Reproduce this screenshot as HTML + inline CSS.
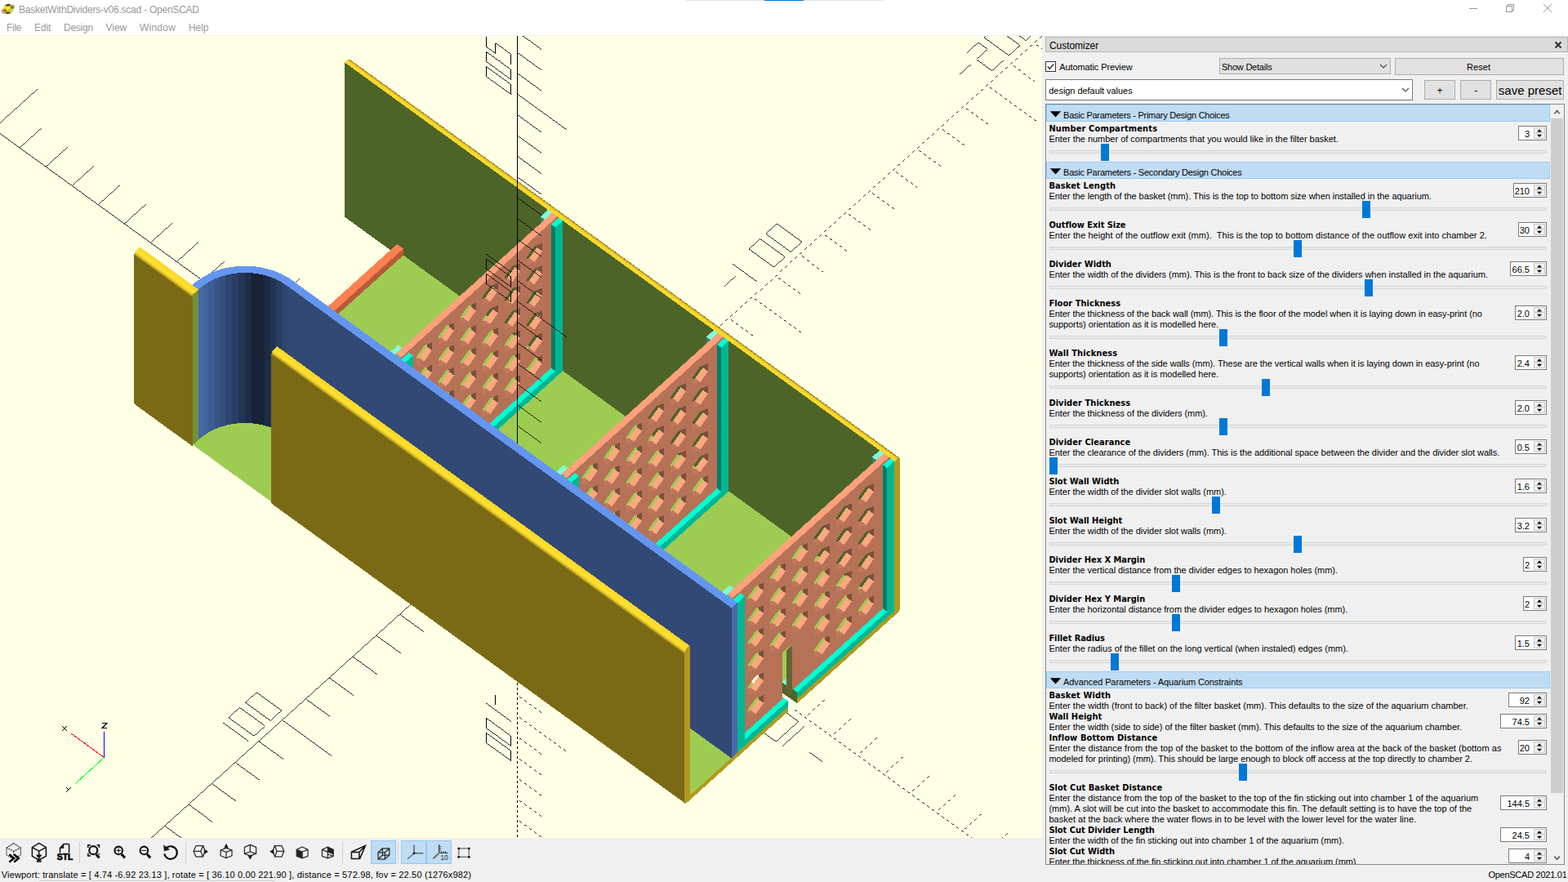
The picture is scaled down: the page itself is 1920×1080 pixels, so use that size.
<!DOCTYPE html>
<html lang="en"><head><meta charset="utf-8"><title>BasketWithDividers-v06.scad - OpenSCAD</title>
<style>
html,body{margin:0;padding:0;width:1920px;height:1080px;overflow:hidden;background:#f0f0f0;font-family:"Liberation Sans", sans-serif;}
.b{position:absolute;display:block}
.t{position:absolute;white-space:pre;line-height:1;font-family:"Liberation Sans", sans-serif;font-size:11px;color:#000}
.bd{font-weight:bold;font-family:"DejaVu Sans Condensed", "Liberation Sans", sans-serif}
#vp{position:absolute;left:0;top:44px;width:1276px;height:982px;overflow:hidden;display:block}
</style></head><body>
<svg id="vp" width="1276" height="982" viewBox="0 0 1276 982" shape-rendering="crispEdges">
<rect width="1276" height="982" fill="#ffffe5"/>
<g stroke="#000" stroke-width="1" fill="none">
<line x1="633.3" y1="578.7" x2="-19.2" y2="105.6" stroke-width="0.81"/>
<line x1="601.2" y1="555.4" x2="628" y2="531.3" stroke-width="0.74"/>
<line x1="569.2" y1="532.2" x2="595.9" y2="508.1" stroke-width="0.74"/>
<line x1="537.1" y1="508.9" x2="563.8" y2="484.8" stroke-width="0.74"/>
<line x1="505" y1="485.7" x2="531.8" y2="461.6" stroke-width="0.74"/>
<line x1="473" y1="462.4" x2="499.7" y2="438.4" stroke-width="0.74"/>
<line x1="440.9" y1="439.2" x2="467.6" y2="415.1" stroke-width="0.74"/>
<line x1="408.8" y1="415.9" x2="435.6" y2="391.9" stroke-width="0.74"/>
<line x1="376.8" y1="392.7" x2="403.5" y2="368.6" stroke-width="0.74"/>
<line x1="344.7" y1="369.4" x2="371.4" y2="345.4" stroke-width="0.74"/>
<line x1="312.6" y1="346.2" x2="366.8" y2="297.4" stroke-width="0.74"/>
<line x1="280.6" y1="322.9" x2="307.3" y2="298.9" stroke-width="0.74"/>
<line x1="248.5" y1="299.7" x2="275.2" y2="275.6" stroke-width="0.74"/>
<line x1="216.4" y1="276.5" x2="243.2" y2="252.4" stroke-width="0.74"/>
<line x1="184.4" y1="253.2" x2="211.1" y2="229.1" stroke-width="0.74"/>
<line x1="152.3" y1="230" x2="179" y2="205.9" stroke-width="0.74"/>
<line x1="120.2" y1="206.7" x2="147" y2="182.6" stroke-width="0.74"/>
<line x1="88.2" y1="183.5" x2="114.9" y2="159.4" stroke-width="0.74"/>
<line x1="56.1" y1="160.2" x2="82.8" y2="136.2" stroke-width="0.74"/>
<line x1="24" y1="137" x2="50.8" y2="112.9" stroke-width="0.74"/>
<line x1="-8" y1="113.7" x2="46.2" y2="64.9" stroke-width="0.74"/>
<line x1="633.3" y1="578.7" x2="2469.8" y2="1910" stroke-width="0.81" stroke-dasharray="3.71 3.71" stroke-dashoffset="3.71"/>
<line x1="665.4" y1="601.9" x2="692.1" y2="577.8" stroke-width="0.74" stroke-dasharray="4.04 4.04" stroke-dashoffset="4.04"/>
<line x1="697.4" y1="625.2" x2="724.2" y2="601.1" stroke-width="0.74" stroke-dasharray="4.04 4.04" stroke-dashoffset="4.04"/>
<line x1="729.5" y1="648.4" x2="756.2" y2="624.3" stroke-width="0.74" stroke-dasharray="4.04 4.04" stroke-dashoffset="4.04"/>
<line x1="761.6" y1="671.6" x2="788.3" y2="647.6" stroke-width="0.74" stroke-dasharray="4.04 4.04" stroke-dashoffset="4.04"/>
<line x1="793.6" y1="694.9" x2="820.3" y2="670.8" stroke-width="0.74" stroke-dasharray="4.04 4.04" stroke-dashoffset="4.04"/>
<line x1="825.7" y1="718.1" x2="852.4" y2="694.1" stroke-width="0.74" stroke-dasharray="4.04 4.04" stroke-dashoffset="4.04"/>
<line x1="857.7" y1="741.4" x2="884.5" y2="717.3" stroke-width="0.74" stroke-dasharray="4.04 4.04" stroke-dashoffset="4.04"/>
<line x1="889.8" y1="764.6" x2="916.5" y2="740.6" stroke-width="0.74" stroke-dasharray="4.04 4.04" stroke-dashoffset="4.04"/>
<line x1="921.9" y1="787.9" x2="948.6" y2="763.8" stroke-width="0.74" stroke-dasharray="4.04 4.04" stroke-dashoffset="4.04"/>
<line x1="953.9" y1="811.1" x2="1008.1" y2="762.3" stroke-width="0.74" stroke-dasharray="4.04 4.04" stroke-dashoffset="4.04"/>
<line x1="986" y1="834.4" x2="1012.7" y2="810.3" stroke-width="0.74" stroke-dasharray="4.04 4.04" stroke-dashoffset="4.04"/>
<line x1="1018.1" y1="857.6" x2="1044.8" y2="833.5" stroke-width="0.74" stroke-dasharray="4.04 4.04" stroke-dashoffset="4.04"/>
<line x1="1050.1" y1="880.9" x2="1076.9" y2="856.8" stroke-width="0.74" stroke-dasharray="4.04 4.04" stroke-dashoffset="4.04"/>
<line x1="1082.2" y1="904.1" x2="1108.9" y2="880" stroke-width="0.74" stroke-dasharray="4.04 4.04" stroke-dashoffset="4.04"/>
<line x1="1114.3" y1="927.4" x2="1141" y2="903.3" stroke-width="0.74" stroke-dasharray="4.04 4.04" stroke-dashoffset="4.04"/>
<line x1="1146.3" y1="950.6" x2="1173.1" y2="926.5" stroke-width="0.74" stroke-dasharray="4.04 4.04" stroke-dashoffset="4.04"/>
<line x1="1178.4" y1="973.8" x2="1205.1" y2="949.8" stroke-width="0.74" stroke-dasharray="4.04 4.04" stroke-dashoffset="4.04"/>
<line x1="1210.5" y1="997.1" x2="1237.2" y2="973" stroke-width="0.74" stroke-dasharray="4.04 4.04" stroke-dashoffset="4.04"/>
<line x1="285.9" y1="382.7" x2="313.4" y2="357.9" stroke-width="0.74"/>
<line x1="263" y1="366" x2="247.7" y2="354.9" stroke-width="0.81"/>
<line x1="247.7" y1="354.9" x2="275.1" y2="330.2" stroke-width="0.74"/>
<line x1="275.1" y1="330.2" x2="290.5" y2="341.3" stroke-width="0.81"/>
<line x1="290.5" y1="341.3" x2="263" y2="366" stroke-width="0.74"/>
<line x1="240" y1="349.4" x2="224.7" y2="338.3" stroke-width="0.81"/>
<line x1="224.7" y1="338.3" x2="252.2" y2="313.5" stroke-width="0.74"/>
<line x1="252.2" y1="313.5" x2="267.5" y2="324.6" stroke-width="0.81"/>
<line x1="267.5" y1="324.6" x2="240" y2="349.4" stroke-width="0.74"/>
<line x1="911.9" y1="836.5" x2="927.3" y2="847.6" stroke-width="0.81"/>
<line x1="927.3" y1="847.6" x2="954.7" y2="822.9" stroke-width="0.74"/>
<line x1="954.7" y1="822.9" x2="939.4" y2="811.8" stroke-width="0.81"/>
<line x1="939.4" y1="811.8" x2="911.9" y2="836.5" stroke-width="0.74"/>
<line x1="934.9" y1="853.1" x2="950.2" y2="864.2" stroke-width="0.81"/>
<line x1="950.2" y1="864.2" x2="977.7" y2="839.5" stroke-width="0.74"/>
<line x1="977.7" y1="839.5" x2="962.4" y2="828.4" stroke-width="0.81"/>
<line x1="962.4" y1="828.4" x2="934.9" y2="853.1" stroke-width="0.74"/>
<line x1="957.9" y1="869.8" x2="985.4" y2="845.1" stroke-width="0.74"/>
<line x1="991.1" y1="877.2" x2="1006.5" y2="888.3" stroke-width="0.81"/>
</g>
<g stroke="#000" stroke-width="1" fill="none">
<line x1="633.3" y1="578.7" x2="155" y2="1009.3" stroke-width="0.74"/>
<line x1="604.5" y1="604.6" x2="634.3" y2="626.2" stroke-width="0.81"/>
<line x1="575.7" y1="630.5" x2="605.6" y2="652.1" stroke-width="0.81"/>
<line x1="547" y1="656.4" x2="576.8" y2="678" stroke-width="0.81"/>
<line x1="518.2" y1="682.3" x2="548" y2="703.9" stroke-width="0.81"/>
<line x1="489.4" y1="708.2" x2="519.2" y2="729.8" stroke-width="0.81"/>
<line x1="460.7" y1="734.1" x2="490.5" y2="755.7" stroke-width="0.81"/>
<line x1="431.9" y1="760" x2="461.7" y2="781.6" stroke-width="0.81"/>
<line x1="403.1" y1="785.9" x2="432.9" y2="807.5" stroke-width="0.81"/>
<line x1="374.4" y1="811.8" x2="404.2" y2="833.4" stroke-width="0.81"/>
<line x1="345.6" y1="837.7" x2="406" y2="881.6" stroke-width="0.81"/>
<line x1="316.8" y1="863.7" x2="346.6" y2="885.3" stroke-width="0.81"/>
<line x1="288" y1="889.6" x2="317.9" y2="911.2" stroke-width="0.81"/>
<line x1="259.3" y1="915.5" x2="289.1" y2="937.1" stroke-width="0.81"/>
<line x1="230.5" y1="941.4" x2="260.3" y2="963" stroke-width="0.81"/>
<line x1="201.7" y1="967.3" x2="231.5" y2="988.9" stroke-width="0.81"/>
<line x1="633.3" y1="578.7" x2="2281" y2="-905.2" stroke-width="0.74" stroke-dasharray="4.04 4.04" stroke-dashoffset="4.04"/>
<line x1="662.1" y1="552.7" x2="691.9" y2="574.4" stroke-width="0.81" stroke-dasharray="3.71 3.71" stroke-dashoffset="3.71"/>
<line x1="690.8" y1="526.8" x2="720.6" y2="548.5" stroke-width="0.81" stroke-dasharray="3.71 3.71" stroke-dashoffset="3.71"/>
<line x1="719.6" y1="500.9" x2="749.4" y2="522.5" stroke-width="0.81" stroke-dasharray="3.71 3.71" stroke-dashoffset="3.71"/>
<line x1="748.4" y1="475" x2="778.2" y2="496.6" stroke-width="0.81" stroke-dasharray="3.71 3.71" stroke-dashoffset="3.71"/>
<line x1="777.1" y1="449.1" x2="807" y2="470.7" stroke-width="0.81" stroke-dasharray="3.71 3.71" stroke-dashoffset="3.71"/>
<line x1="805.9" y1="423.2" x2="835.7" y2="444.8" stroke-width="0.81" stroke-dasharray="3.71 3.71" stroke-dashoffset="3.71"/>
<line x1="834.7" y1="397.3" x2="864.5" y2="418.9" stroke-width="0.81" stroke-dasharray="3.71 3.71" stroke-dashoffset="3.71"/>
<line x1="863.5" y1="371.4" x2="893.3" y2="393" stroke-width="0.81" stroke-dasharray="3.71 3.71" stroke-dashoffset="3.71"/>
<line x1="892.2" y1="345.5" x2="922" y2="367.1" stroke-width="0.81" stroke-dasharray="3.71 3.71" stroke-dashoffset="3.71"/>
<line x1="921" y1="319.6" x2="981.4" y2="363.4" stroke-width="0.81" stroke-dasharray="3.71 3.71" stroke-dashoffset="3.71"/>
<line x1="949.8" y1="293.7" x2="979.6" y2="315.3" stroke-width="0.81" stroke-dasharray="3.71 3.71" stroke-dashoffset="3.71"/>
<line x1="978.5" y1="267.8" x2="1008.3" y2="289.4" stroke-width="0.81" stroke-dasharray="3.71 3.71" stroke-dashoffset="3.71"/>
<line x1="1007.3" y1="241.8" x2="1037.1" y2="263.5" stroke-width="0.81" stroke-dasharray="3.71 3.71" stroke-dashoffset="3.71"/>
<line x1="1036.1" y1="215.9" x2="1065.9" y2="237.6" stroke-width="0.81" stroke-dasharray="3.71 3.71" stroke-dashoffset="3.71"/>
<line x1="1064.8" y1="190" x2="1094.7" y2="211.6" stroke-width="0.81" stroke-dasharray="3.71 3.71" stroke-dashoffset="3.71"/>
<line x1="1093.6" y1="164.1" x2="1123.4" y2="185.7" stroke-width="0.81" stroke-dasharray="3.71 3.71" stroke-dashoffset="3.71"/>
<line x1="1122.4" y1="138.2" x2="1152.2" y2="159.8" stroke-width="0.81" stroke-dasharray="3.71 3.71" stroke-dashoffset="3.71"/>
<line x1="1151.2" y1="112.3" x2="1181" y2="133.9" stroke-width="0.81" stroke-dasharray="3.71 3.71" stroke-dashoffset="3.71"/>
<line x1="1179.9" y1="86.4" x2="1209.7" y2="108" stroke-width="0.81" stroke-dasharray="3.71 3.71" stroke-dashoffset="3.71"/>
<line x1="1208.7" y1="60.5" x2="1269.1" y2="104.3" stroke-width="0.81" stroke-dasharray="3.71 3.71" stroke-dashoffset="3.71"/>
<line x1="1237.5" y1="34.6" x2="1267.3" y2="56.2" stroke-width="0.81" stroke-dasharray="3.71 3.71" stroke-dashoffset="3.71"/>
<line x1="1266.2" y1="8.7" x2="1296.1" y2="30.3" stroke-width="0.81" stroke-dasharray="3.71 3.71" stroke-dashoffset="3.71"/>
<line x1="314.2" y1="803.8" x2="300.4" y2="816.2" stroke-width="0.74"/>
<line x1="300.4" y1="816.2" x2="331.1" y2="838.4" stroke-width="0.81"/>
<line x1="331.1" y1="838.4" x2="344.8" y2="826" stroke-width="0.74"/>
<line x1="344.8" y1="826" x2="314.2" y2="803.8" stroke-width="0.81"/>
<line x1="293.6" y1="822.4" x2="279.8" y2="834.7" stroke-width="0.74"/>
<line x1="279.8" y1="834.7" x2="310.5" y2="856.9" stroke-width="0.81"/>
<line x1="310.5" y1="856.9" x2="324.2" y2="844.6" stroke-width="0.74"/>
<line x1="324.2" y1="844.6" x2="293.6" y2="822.4" stroke-width="0.81"/>
<line x1="273" y1="840.9" x2="303.6" y2="863.1" stroke-width="0.81"/>
<line x1="887.3" y1="306.3" x2="901.1" y2="294" stroke-width="0.74"/>
<line x1="896.5" y1="279.5" x2="927.1" y2="301.7" stroke-width="0.81"/>
<line x1="917.1" y1="260.9" x2="930.8" y2="248.5" stroke-width="0.74"/>
<line x1="930.8" y1="248.5" x2="961.4" y2="270.7" stroke-width="0.81"/>
<line x1="961.4" y1="270.7" x2="947.7" y2="283.1" stroke-width="0.74"/>
<line x1="947.7" y1="283.1" x2="917.1" y2="260.9" stroke-width="0.81"/>
<line x1="937.7" y1="242.3" x2="951.4" y2="230" stroke-width="0.74"/>
<line x1="951.4" y1="230" x2="982" y2="252.2" stroke-width="0.81"/>
<line x1="982" y1="252.2" x2="968.3" y2="264.5" stroke-width="0.74"/>
<line x1="968.3" y1="264.5" x2="937.7" y2="242.3" stroke-width="0.81"/>
<line x1="1175" y1="47.3" x2="1188.8" y2="34.9" stroke-width="0.74"/>
<line x1="1184.2" y1="20.4" x2="1197.9" y2="8" stroke-width="0.74"/>
<line x1="1197.9" y1="8" x2="1209.4" y2="16.3" stroke-width="0.81"/>
<line x1="1209.4" y1="16.3" x2="1195.6" y2="28.7" stroke-width="0.74"/>
<line x1="1195.6" y1="28.7" x2="1214.8" y2="42.6" stroke-width="0.81"/>
<line x1="1214.8" y1="42.6" x2="1228.5" y2="30.2" stroke-width="0.74"/>
<line x1="1204.8" y1="1.8" x2="1218.5" y2="-10.6" stroke-width="0.74"/>
<line x1="1218.5" y1="-10.6" x2="1249.1" y2="11.6" stroke-width="0.81"/>
<line x1="1249.1" y1="11.6" x2="1235.4" y2="24" stroke-width="0.74"/>
<line x1="1235.4" y1="24" x2="1204.8" y2="1.8" stroke-width="0.81"/>
<line x1="1269.7" y1="-6.9" x2="1256" y2="5.5" stroke-width="0.74"/>
<line x1="1256" y1="5.5" x2="1225.4" y2="-16.7" stroke-width="0.81"/>
</g>
<polygon points="1095.4,709.8 422,221.6 422,32.5 1095.4,520.7" fill="#4d6428"/>
<polygon points="1098,518.3 424.6,30.2 422,32.5 1095.4,520.7" fill="#fbd82c"/>
<polygon points="1098,518.3 424.6,30.2 425.4,29.5 1098.8,517.7" fill="#f3d22b"/>
<polygon points="1098.8,517.7 425.4,29.5 426.2,29.1 1099.5,517.2" fill="#e0c128"/>
<polygon points="1099.5,517.2 426.2,29.1 426.9,28.7 1100.2,516.9" fill="#c7ac23"/>
<polygon points="1100.2,516.9 426.9,28.7 427.5,28.6 1100.9,516.7" fill="#a9921e"/>
<polygon points="1100.9,516.7 427.5,28.6 428,28.6 1101.4,516.7" fill="#877518"/>
<polygon points="1101.4,516.7 428,28.6 428.4,28.8 1101.8,516.9" fill="#635511"/>
<polygon points="1095.4,709.8 1095.4,520.7 1098,518.3 1099.3,517.3 1100.5,516.8 1101.5,516.8 1102.1,517.3 1102.3,518.3 1102.3,699.8 1102.1,701.1 1101.5,702.7 1100.5,704.4 1099.3,706.1 1098,707.5" fill="#b29a1f"/>
<polygon points="1095.4,704.7 493.9,268.6 236.1,500.7 837.6,936.8" fill="#9ecc52"/>
<polygon points="270.6,469.7 262.9,464.1 262.9,456 270.6,461.5" fill="#7d3e27"/>
<polygon points="493.9,268.6 270.6,469.7 270.6,461.5 493.9,260.5" fill="#b65b39"/>
<polygon points="493.9,260.5 486.2,254.9 262.9,456 270.6,461.5" fill="#ff8051"/>
<polygon points="666.9,409 661.8,405.3 661.8,221.3 666.9,225" fill="#3e7d68"/>
<polygon points="676.1,400.7 666.9,409 666.9,225 676.1,216.7" fill="#5bb697"/>
<polygon points="676.1,216.7 671,213 661.8,221.3 666.9,225" fill="#80ffd5"/>
<polygon points="483.3,574.3 478.2,570.6 478.2,386.6 483.3,390.3" fill="#3e7d68"/>
<polygon points="492.5,566 483.3,574.3 483.3,390.3 492.5,382" fill="#5bb697"/>
<polygon points="492.5,382 487.4,378.3 478.2,386.6 483.3,390.3" fill="#80ffd5"/>
<polygon points="682.5,221.3 676.1,216.7 484.8,389 491.2,393.6" fill="#ffa17b"/>
<path d="M682.5 405.4 L491.2 577.7 L491.2 393.6 L682.5 221.3ZM522.5 377.8 L522.5 380.3 L513.1 393.6 L510 394.8 L510 392.3 L519.5 379ZM522.5 405.3 L522.5 407.8 L513.1 421.1 L510 422.3 L510 419.8 L519.5 406.5ZM522.5 432.8 L522.5 435.2 L513.1 448.6 L510 449.8 L510 447.3 L519.5 434ZM522.5 460.2 L522.5 462.7 L513.1 476.1 L510 477.3 L510 474.8 L519.5 461.4ZM522.5 487.7 L522.5 490.2 L513.1 503.6 L510 504.8 L510 502.3 L519.5 488.9ZM522.5 515.2 L522.5 517.7 L513.1 531.1 L510 532.3 L510 529.8 L519.5 516.4ZM549.5 353.5 L549.5 356 L540 369.3 L537 370.5 L537 368 L546.5 354.7ZM549.5 381 L549.5 383.5 L540 396.8 L537 398 L537 395.5 L546.5 382.2ZM549.5 408.5 L549.5 410.9 L540 424.3 L537 425.5 L537 423 L546.5 409.7ZM549.5 435.9 L549.5 438.4 L540 451.8 L537 453 L537 450.5 L546.5 437.1ZM549.5 463.4 L549.5 465.9 L540 479.3 L537 480.5 L537 478 L546.5 464.6ZM549.5 490.9 L549.5 493.4 L540 506.8 L537 508 L537 505.5 L546.5 492.1ZM576.5 329.2 L576.5 331.7 L567 345 L564 346.2 L564 343.7 L573.4 330.4ZM576.5 356.7 L576.5 359.2 L567 372.5 L564 373.7 L564 371.2 L573.4 357.9ZM576.5 384.2 L576.5 386.6 L567 400 L564 401.2 L564 398.7 L573.4 385.3ZM576.5 411.6 L576.5 414.1 L567 427.5 L564 428.7 L564 426.2 L573.4 412.8ZM576.5 439.1 L576.5 441.6 L567 455 L564 456.2 L564 453.7 L573.4 440.3ZM576.5 466.6 L576.5 469.1 L567 482.5 L564 483.7 L564 481.2 L573.4 467.8ZM603.5 304.9 L603.5 307.4 L594 320.7 L591 321.9 L591 319.4 L600.4 306.1ZM603.5 332.4 L603.5 334.9 L594 348.2 L591 349.4 L591 346.9 L600.4 333.6ZM603.5 359.9 L603.5 362.3 L594 375.7 L591 376.9 L591 374.4 L600.4 361ZM603.5 387.3 L603.5 389.8 L594 403.2 L591 404.4 L591 401.9 L600.4 388.5ZM603.5 414.8 L603.5 417.3 L594 430.7 L591 431.9 L591 429.4 L600.4 416ZM603.5 442.3 L603.5 444.8 L594 458.2 L591 459.4 L591 456.9 L600.4 443.5ZM630.5 280.6 L630.5 283.1 L621 296.4 L617.9 297.6 L617.9 295.1 L627.4 281.8ZM630.5 308.1 L630.5 310.5 L621 323.9 L617.9 325.1 L617.9 322.6 L627.4 309.3ZM630.5 335.6 L630.5 338 L621 351.4 L617.9 352.6 L617.9 350.1 L627.4 336.7ZM630.5 363 L630.5 365.5 L621 378.9 L617.9 380.1 L617.9 377.6 L627.4 364.2ZM630.5 390.5 L630.5 393 L621 406.4 L617.9 407.6 L617.9 405.1 L627.4 391.7ZM630.5 418 L630.5 420.5 L621 433.9 L617.9 435.1 L617.9 432.6 L627.4 419.2ZM657.5 256.3 L657.5 258.8 L648 272.1 L644.9 273.3 L644.9 270.8 L654.4 257.5ZM657.5 283.8 L657.5 286.2 L648 299.6 L644.9 300.8 L644.9 298.3 L654.4 285ZM657.5 311.2 L657.5 313.7 L648 327.1 L644.9 328.3 L644.9 325.8 L654.4 312.4ZM657.5 338.7 L657.5 341.2 L648 354.6 L644.9 355.8 L644.9 353.3 L654.4 339.9ZM657.5 366.2 L657.5 368.7 L648 382.1 L644.9 383.3 L644.9 380.8 L654.4 367.4ZM657.5 393.7 L657.5 396.2 L648 409.6 L644.9 410.7 L644.9 408.3 L654.4 394.9Z" fill="#b67257" fill-rule="evenodd"/>
<polygon points="522.5,380.3 522.5,377.8 528.9,375.3 528.9,375.3 528.9,384.9" fill="#7d4f3c"/>
<polygon points="513.1,393.6 522.5,380.3 528.9,384.9 519.5,398.3" fill="#ffa77f"/>
<polygon points="510,402 510,394.8 513.1,393.6 519.5,398.3 510,402" fill="#c0785c"/>
<polygon points="528.9,375.3 519.5,379 519.5,379 519.5,379 528.9,375.3" fill="#7d4f3c"/>
<polygon points="522.5,407.8 522.5,405.3 528.9,402.8 528.9,402.8 528.9,412.4" fill="#7d4f3c"/>
<polygon points="513.1,421.1 522.5,407.8 528.9,412.4 519.5,425.8" fill="#ffa77f"/>
<polygon points="510,429.5 510,422.3 513.1,421.1 519.5,425.8 510,429.5" fill="#c0785c"/>
<polygon points="528.9,402.8 519.5,406.5 519.5,406.5 519.5,406.5 528.9,402.8" fill="#7d4f3c"/>
<polygon points="522.5,435.2 522.5,432.8 528.9,430.3 528.9,430.3 528.9,439.9" fill="#7d4f3c"/>
<polygon points="513.1,448.6 522.5,435.2 528.9,439.9 519.5,453.2" fill="#ffa77f"/>
<polygon points="510,456.9 510,449.8 513.1,448.6 519.5,453.2 510,456.9" fill="#c0785c"/>
<polygon points="528.9,430.3 519.5,434 519.5,434 519.5,434 528.9,430.3" fill="#7d4f3c"/>
<polygon points="522.5,462.7 522.5,460.2 528.9,457.7 528.9,457.7 528.9,467.4" fill="#7d4f3c"/>
<polygon points="513.1,476.1 522.5,462.7 528.9,467.4 519.5,480.7" fill="#ffa77f"/>
<polygon points="510,484.4 510,477.3 513.1,476.1 519.5,480.7 510,484.4" fill="#c0785c"/>
<polygon points="528.9,457.7 519.5,461.4 519.5,461.4 519.5,461.4 528.9,457.7" fill="#7d4f3c"/>
<polygon points="522.5,490.2 522.5,487.7 528.9,485.2 528.9,485.2 528.9,494.9" fill="#7d4f3c"/>
<polygon points="513.1,503.6 522.5,490.2 528.9,494.9 519.5,508.2" fill="#ffa77f"/>
<polygon points="510,511.9 510,504.8 513.1,503.6 519.5,508.2 510,511.9" fill="#c0785c"/>
<polygon points="528.9,485.2 519.5,488.9 519.5,488.9 519.5,488.9 528.9,485.2" fill="#7d4f3c"/>
<polygon points="522.5,517.7 522.5,515.2 528.9,512.7 528.9,512.7 528.9,522.4" fill="#7d4f3c"/>
<polygon points="513.1,531.1 522.5,517.7 528.9,522.4 519.5,535.7" fill="#ffa77f"/>
<polygon points="510,539.4 510,532.3 513.1,531.1 519.5,535.7 510,539.4" fill="#c0785c"/>
<polygon points="528.9,512.7 519.5,516.4 519.5,516.4 519.5,516.4 528.9,512.7" fill="#7d4f3c"/>
<polygon points="549.5,356 549.5,353.5 555.9,351 555.9,351 555.9,360.6" fill="#7d4f3c"/>
<polygon points="540,369.3 549.5,356 555.9,360.6 546.5,374" fill="#ffa77f"/>
<polygon points="537,377.7 537,370.5 540,369.3 546.5,374 537,377.7" fill="#c0785c"/>
<polygon points="555.9,351 546.5,354.7 546.5,354.7 546.5,354.7 555.9,351" fill="#7d4f3c"/>
<polygon points="549.5,383.5 549.5,381 555.9,378.5 555.9,378.5 555.9,388.1" fill="#7d4f3c"/>
<polygon points="540,396.8 549.5,383.5 555.9,388.1 546.5,401.5" fill="#ffa77f"/>
<polygon points="537,405.2 537,398 540,396.8 546.5,401.5 537,405.2" fill="#c0785c"/>
<polygon points="555.9,378.5 546.5,382.2 546.5,382.2 546.5,382.2 555.9,378.5" fill="#7d4f3c"/>
<polygon points="549.5,410.9 549.5,408.5 555.9,405.9 555.9,405.9 555.9,415.6" fill="#7d4f3c"/>
<polygon points="540,424.3 549.5,410.9 555.9,415.6 546.5,428.9" fill="#ffa77f"/>
<polygon points="537,432.6 537,425.5 540,424.3 546.5,428.9 537,432.6" fill="#c0785c"/>
<polygon points="555.9,405.9 546.5,409.7 546.5,409.7 546.5,409.7 555.9,405.9" fill="#7d4f3c"/>
<polygon points="549.5,438.4 549.5,435.9 555.9,433.4 555.9,433.4 555.9,443.1" fill="#7d4f3c"/>
<polygon points="540,451.8 549.5,438.4 555.9,443.1 546.5,456.4" fill="#ffa77f"/>
<polygon points="537,460.1 537,453 540,451.8 546.5,456.4 537,460.1" fill="#c0785c"/>
<polygon points="555.9,433.4 546.5,437.1 546.5,437.1 546.5,437.1 555.9,433.4" fill="#7d4f3c"/>
<polygon points="549.5,465.9 549.5,463.4 555.9,460.9 555.9,460.9 555.9,470.6" fill="#7d4f3c"/>
<polygon points="540,479.3 549.5,465.9 555.9,470.6 546.5,483.9" fill="#ffa77f"/>
<polygon points="537,487.6 537,480.5 540,479.3 546.5,483.9 537,487.6" fill="#c0785c"/>
<polygon points="555.9,460.9 546.5,464.6 546.5,464.6 546.5,464.6 555.9,460.9" fill="#7d4f3c"/>
<polygon points="549.5,493.4 549.5,490.9 555.9,488.4 555.9,488.4 555.9,498.1" fill="#7d4f3c"/>
<polygon points="540,506.8 549.5,493.4 555.9,498.1 546.5,511.4" fill="#ffa77f"/>
<polygon points="537,515.1 537,508 540,506.8 546.5,511.4 537,515.1" fill="#c0785c"/>
<polygon points="555.9,488.4 546.5,492.1 546.5,492.1 546.5,492.1 555.9,488.4" fill="#7d4f3c"/>
<polygon points="576.5,331.7 576.5,329.2 582.9,326.7 582.9,326.7 582.9,336.3" fill="#7d4f3c"/>
<polygon points="567,345 576.5,331.7 582.9,336.3 573.4,349.7" fill="#ffa77f"/>
<polygon points="564,353.4 564,346.2 567,345 573.4,349.7 564,353.4" fill="#c0785c"/>
<polygon points="582.9,326.7 573.4,330.4 573.4,330.4 573.4,330.4 582.9,326.7" fill="#7d4f3c"/>
<polygon points="576.5,359.2 576.5,356.7 582.9,354.2 582.9,354.2 582.9,363.8" fill="#7d4f3c"/>
<polygon points="567,372.5 576.5,359.2 582.9,363.8 573.4,377.2" fill="#ffa77f"/>
<polygon points="564,380.9 564,373.7 567,372.5 573.4,377.2 564,380.9" fill="#c0785c"/>
<polygon points="582.9,354.2 573.4,357.9 573.4,357.9 573.4,357.9 582.9,354.2" fill="#7d4f3c"/>
<polygon points="576.5,386.6 576.5,384.2 582.9,381.6 582.9,381.6 582.9,391.3" fill="#7d4f3c"/>
<polygon points="567,400 576.5,386.6 582.9,391.3 573.4,404.6" fill="#ffa77f"/>
<polygon points="564,408.3 564,401.2 567,400 573.4,404.6 564,408.3" fill="#c0785c"/>
<polygon points="582.9,381.6 573.4,385.3 573.4,385.3 573.4,385.3 582.9,381.6" fill="#7d4f3c"/>
<polygon points="576.5,414.1 576.5,411.6 582.9,409.1 582.9,409.1 582.9,418.8" fill="#7d4f3c"/>
<polygon points="567,427.5 576.5,414.1 582.9,418.8 573.4,432.1" fill="#ffa77f"/>
<polygon points="564,435.8 564,428.7 567,427.5 573.4,432.1 564,435.8" fill="#c0785c"/>
<polygon points="582.9,409.1 573.4,412.8 573.4,412.8 573.4,412.8 582.9,409.1" fill="#7d4f3c"/>
<polygon points="576.5,441.6 576.5,439.1 582.9,436.6 582.9,436.6 582.9,446.3" fill="#7d4f3c"/>
<polygon points="567,455 576.5,441.6 582.9,446.3 573.4,459.6" fill="#ffa77f"/>
<polygon points="564,463.3 564,456.2 567,455 573.4,459.6 564,463.3" fill="#c0785c"/>
<polygon points="582.9,436.6 573.4,440.3 573.4,440.3 573.4,440.3 582.9,436.6" fill="#7d4f3c"/>
<polygon points="576.5,469.1 576.5,466.6 582.9,464.1 582.9,464.1 582.9,473.8" fill="#7d4f3c"/>
<polygon points="567,482.5 576.5,469.1 582.9,473.8 573.4,487.1" fill="#ffa77f"/>
<polygon points="564,490.8 564,483.7 567,482.5 573.4,487.1 564,490.8" fill="#c0785c"/>
<polygon points="582.9,464.1 573.4,467.8 573.4,467.8 573.4,467.8 582.9,464.1" fill="#7d4f3c"/>
<polygon points="603.5,307.4 603.5,304.9 609.9,302.4 609.9,302.4 609.9,312" fill="#7d4f3c"/>
<polygon points="594,320.7 603.5,307.4 609.9,312 600.4,325.4" fill="#ffa77f"/>
<polygon points="591,329.1 591,321.9 594,320.7 600.4,325.4 591,329.1" fill="#c0785c"/>
<polygon points="609.9,302.4 600.4,306.1 600.4,306.1 600.4,306.1 609.9,302.4" fill="#7d4f3c"/>
<polygon points="603.5,334.9 603.5,332.4 609.9,329.9 609.9,329.9 609.9,339.5" fill="#7d4f3c"/>
<polygon points="594,348.2 603.5,334.9 609.9,339.5 600.4,352.8" fill="#ffa77f"/>
<polygon points="591,356.6 591,349.4 594,348.2 600.4,352.8 591,356.6" fill="#c0785c"/>
<polygon points="609.9,329.9 600.4,333.6 600.4,333.6 600.4,333.6 609.9,329.9" fill="#7d4f3c"/>
<polygon points="603.5,362.3 603.5,359.9 609.9,357.3 609.9,357.3 609.9,367" fill="#7d4f3c"/>
<polygon points="594,375.7 603.5,362.3 609.9,367 600.4,380.3" fill="#ffa77f"/>
<polygon points="591,384 591,376.9 594,375.7 600.4,380.3 591,384" fill="#c0785c"/>
<polygon points="609.9,357.3 600.4,361 600.4,361 600.4,361 609.9,357.3" fill="#7d4f3c"/>
<polygon points="603.5,389.8 603.5,387.3 609.9,384.8 609.9,384.8 609.9,394.5" fill="#7d4f3c"/>
<polygon points="594,403.2 603.5,389.8 609.9,394.5 600.4,407.8" fill="#ffa77f"/>
<polygon points="591,411.5 591,404.4 594,403.2 600.4,407.8 591,411.5" fill="#c0785c"/>
<polygon points="609.9,384.8 600.4,388.5 600.4,388.5 600.4,388.5 609.9,384.8" fill="#7d4f3c"/>
<polygon points="603.5,417.3 603.5,414.8 609.9,412.3 609.9,412.3 609.9,422" fill="#7d4f3c"/>
<polygon points="594,430.7 603.5,417.3 609.9,422 600.4,435.3" fill="#ffa77f"/>
<polygon points="591,439 591,431.9 594,430.7 600.4,435.3 591,439" fill="#c0785c"/>
<polygon points="609.9,412.3 600.4,416 600.4,416 600.4,416 609.9,412.3" fill="#7d4f3c"/>
<polygon points="603.5,444.8 603.5,442.3 609.9,439.8 609.9,439.8 609.9,449.5" fill="#7d4f3c"/>
<polygon points="594,458.2 603.5,444.8 609.9,449.5 600.4,462.8" fill="#ffa77f"/>
<polygon points="591,466.5 591,459.4 594,458.2 600.4,462.8 591,466.5" fill="#c0785c"/>
<polygon points="609.9,439.8 600.4,443.5 600.4,443.5 600.4,443.5 609.9,439.8" fill="#7d4f3c"/>
<polygon points="630.5,283.1 630.5,280.6 636.9,278.1 636.9,278.1 636.9,287.7" fill="#7d4f3c"/>
<polygon points="621,296.4 630.5,283.1 636.9,287.7 627.4,301.1" fill="#ffa77f"/>
<polygon points="617.9,304.8 617.9,297.6 621,296.4 627.4,301.1 617.9,304.8" fill="#c0785c"/>
<polygon points="636.9,278.1 627.4,281.8 627.4,281.8 627.4,281.8 636.9,278.1" fill="#7d4f3c"/>
<polygon points="630.5,310.5 630.5,308.1 636.9,305.6 636.9,305.6 636.9,315.2" fill="#7d4f3c"/>
<polygon points="621,323.9 630.5,310.5 636.9,315.2 627.4,328.5" fill="#ffa77f"/>
<polygon points="617.9,332.3 617.9,325.1 621,323.9 627.4,328.5 617.9,332.3" fill="#c0785c"/>
<polygon points="636.9,305.6 627.4,309.3 627.4,309.3 627.4,309.3 636.9,305.6" fill="#7d4f3c"/>
<polygon points="630.5,338 630.5,335.6 636.9,333 636.9,333 636.9,342.7" fill="#7d4f3c"/>
<polygon points="621,351.4 630.5,338 636.9,342.7 627.4,356" fill="#ffa77f"/>
<polygon points="617.9,359.7 617.9,352.6 621,351.4 627.4,356 617.9,359.7" fill="#c0785c"/>
<polygon points="636.9,333 627.4,336.7 627.4,336.7 627.4,336.7 636.9,333" fill="#7d4f3c"/>
<polygon points="630.5,365.5 630.5,363 636.9,360.5 636.9,360.5 636.9,370.2" fill="#7d4f3c"/>
<polygon points="621,378.9 630.5,365.5 636.9,370.2 627.4,383.5" fill="#ffa77f"/>
<polygon points="617.9,387.2 617.9,380.1 621,378.9 627.4,383.5 617.9,387.2" fill="#c0785c"/>
<polygon points="636.9,360.5 627.4,364.2 627.4,364.2 627.4,364.2 636.9,360.5" fill="#7d4f3c"/>
<polygon points="630.5,393 630.5,390.5 636.9,388 636.9,388 636.9,397.7" fill="#7d4f3c"/>
<polygon points="621,406.4 630.5,393 636.9,397.7 627.4,411" fill="#ffa77f"/>
<polygon points="617.9,414.7 617.9,407.6 621,406.4 627.4,411 617.9,414.7" fill="#c0785c"/>
<polygon points="636.9,388 627.4,391.7 627.4,391.7 627.4,391.7 636.9,388" fill="#7d4f3c"/>
<polygon points="630.5,420.5 630.5,418 636.9,415.5 636.9,415.5 636.9,425.2" fill="#7d4f3c"/>
<polygon points="621,433.9 630.5,420.5 636.9,425.2 627.4,438.5" fill="#ffa77f"/>
<polygon points="617.9,442.2 617.9,435.1 621,433.9 627.4,438.5 617.9,442.2" fill="#c0785c"/>
<polygon points="636.9,415.5 627.4,419.2 627.4,419.2 627.4,419.2 636.9,415.5" fill="#7d4f3c"/>
<polygon points="657.5,258.8 657.5,256.3 663.9,253.8 663.9,253.8 663.9,263.4" fill="#7d4f3c"/>
<polygon points="648,272.1 657.5,258.8 663.9,263.4 654.4,276.8" fill="#ffa77f"/>
<polygon points="644.9,280.5 644.9,273.3 648,272.1 654.4,276.8 644.9,280.5" fill="#c0785c"/>
<polygon points="663.9,253.8 654.4,257.5 654.4,257.5 654.4,257.5 663.9,253.8" fill="#7d4f3c"/>
<polygon points="657.5,286.2 657.5,283.8 663.9,281.3 663.9,281.3 663.9,290.9" fill="#7d4f3c"/>
<polygon points="648,299.6 657.5,286.2 663.9,290.9 654.4,304.2" fill="#ffa77f"/>
<polygon points="644.9,307.9 644.9,300.8 648,299.6 654.4,304.2 644.9,307.9" fill="#c0785c"/>
<polygon points="663.9,281.3 654.4,285 654.4,285 654.4,285 663.9,281.3" fill="#7d4f3c"/>
<polygon points="657.5,313.7 657.5,311.2 663.9,308.7 663.9,308.7 663.9,318.4" fill="#7d4f3c"/>
<polygon points="648,327.1 657.5,313.7 663.9,318.4 654.4,331.7" fill="#ffa77f"/>
<polygon points="644.9,335.4 644.9,328.3 648,327.1 654.4,331.7 644.9,335.4" fill="#c0785c"/>
<polygon points="663.9,308.7 654.4,312.4 654.4,312.4 654.4,312.4 663.9,308.7" fill="#7d4f3c"/>
<polygon points="657.5,341.2 657.5,338.7 663.9,336.2 663.9,336.2 663.9,345.9" fill="#7d4f3c"/>
<polygon points="648,354.6 657.5,341.2 663.9,345.9 654.4,359.2" fill="#ffa77f"/>
<polygon points="644.9,362.9 644.9,355.8 648,354.6 654.4,359.2 644.9,362.9" fill="#c0785c"/>
<polygon points="663.9,336.2 654.4,339.9 654.4,339.9 654.4,339.9 663.9,336.2" fill="#7d4f3c"/>
<polygon points="657.5,368.7 657.5,366.2 663.9,363.7 663.9,363.7 663.9,373.4" fill="#7d4f3c"/>
<polygon points="648,382.1 657.5,368.7 663.9,373.4 654.4,386.7" fill="#ffa77f"/>
<polygon points="644.9,390.4 644.9,383.3 648,382.1 654.4,386.7 644.9,390.4" fill="#c0785c"/>
<polygon points="663.9,363.7 654.4,367.4 654.4,367.4 654.4,367.4 663.9,363.7" fill="#7d4f3c"/>
<polygon points="657.5,396.2 657.5,393.7 663.9,391.2 663.9,391.2 663.9,400.9" fill="#7d4f3c"/>
<polygon points="648,409.6 657.5,396.2 663.9,400.9 654.4,414.2" fill="#ffa77f"/>
<polygon points="644.9,417.9 644.9,410.7 648,409.6 654.4,414.2 644.9,417.9" fill="#c0785c"/>
<polygon points="663.9,391.2 654.4,394.9 654.4,394.9 654.4,394.9 663.9,391.2" fill="#7d4f3c"/>
<polygon points="680,418.5 674.9,414.8 674.9,230.8 680,234.5" fill="#007d66"/>
<polygon points="689.2,410.2 680,418.5 680,234.5 689.2,226.2" fill="#00b695"/>
<polygon points="689.2,226.2 684.1,222.5 674.9,230.8 680,234.5" fill="#00ffd1"/>
<polygon points="505.7,575.5 500.6,571.8 500.6,563.7 505.7,567.4" fill="#007d66"/>
<polygon points="680,418.5 505.7,575.5 505.7,567.4 680,410.4" fill="#00b695"/>
<polygon points="680,410.4 674.9,406.7 500.6,563.7 505.7,567.4" fill="#00ffd1"/>
<polygon points="496.5,583.8 491.4,580.1 491.4,396.1 496.5,399.8" fill="#007d66"/>
<polygon points="505.7,575.5 496.5,583.8 496.5,399.8 505.7,391.5" fill="#00b695"/>
<polygon points="505.7,391.5 500.6,387.8 491.4,396.1 496.5,399.8" fill="#00ffd1"/>
<g stroke="#000" stroke-width="1" fill="none">
<line x1="633.3" y1="578.7" x2="633.3" y2="-19"/>
<line x1="633.3" y1="553.3" x2="663.1" y2="574.9" stroke-width="0.81"/>
<line x1="633.3" y1="527.9" x2="663.1" y2="549.5" stroke-width="0.81"/>
<line x1="633.3" y1="502.5" x2="663.1" y2="524.1" stroke-width="0.81"/>
<line x1="633.3" y1="477.1" x2="663.1" y2="498.7" stroke-width="0.81"/>
<line x1="633.3" y1="451.7" x2="663.1" y2="473.4" stroke-width="0.81"/>
<line x1="633.3" y1="426.4" x2="663.1" y2="448" stroke-width="0.81"/>
<line x1="633.3" y1="401" x2="663.1" y2="422.6" stroke-width="0.81"/>
<line x1="633.3" y1="375.6" x2="663.1" y2="397.2" stroke-width="0.81"/>
<line x1="633.3" y1="350.2" x2="663.1" y2="371.8" stroke-width="0.81"/>
<line x1="633.3" y1="324.8" x2="693.7" y2="368.6" stroke-width="0.81"/>
<line x1="633.3" y1="299.4" x2="663.1" y2="321.1" stroke-width="0.81"/>
<line x1="633.3" y1="274.1" x2="663.1" y2="295.7" stroke-width="0.81"/>
<line x1="633.3" y1="248.7" x2="663.1" y2="270.3" stroke-width="0.81"/>
<line x1="633.3" y1="223.3" x2="663.1" y2="244.9" stroke-width="0.81"/>
<line x1="633.3" y1="197.9" x2="663.1" y2="219.5" stroke-width="0.81"/>
<line x1="633.3" y1="172.5" x2="663.1" y2="194.1" stroke-width="0.81"/>
<line x1="633.3" y1="147.1" x2="663.1" y2="168.8" stroke-width="0.81"/>
<line x1="633.3" y1="121.8" x2="663.1" y2="143.4" stroke-width="0.81"/>
<line x1="633.3" y1="96.4" x2="663.1" y2="118" stroke-width="0.81"/>
<line x1="633.3" y1="71" x2="693.7" y2="114.8" stroke-width="0.81"/>
<line x1="633.3" y1="45.6" x2="663.1" y2="67.2" stroke-width="0.81"/>
<line x1="633.3" y1="20.2" x2="663.1" y2="41.8" stroke-width="0.81"/>
<line x1="633.3" y1="-5.1" x2="663.1" y2="16.5" stroke-width="0.81"/>
<line x1="633.3" y1="578.7" x2="633.3" y2="2032" stroke-dasharray="3.00 3.00" stroke-dashoffset="3.00"/>
<line x1="633.3" y1="604" x2="663.1" y2="625.7" stroke-width="0.81" stroke-dasharray="3.71 3.71" stroke-dashoffset="3.71"/>
<line x1="633.3" y1="629.4" x2="663.1" y2="651" stroke-width="0.81" stroke-dasharray="3.71 3.71" stroke-dashoffset="3.71"/>
<line x1="633.3" y1="654.8" x2="663.1" y2="676.4" stroke-width="0.81" stroke-dasharray="3.71 3.71" stroke-dashoffset="3.71"/>
<line x1="633.3" y1="680.2" x2="663.1" y2="701.8" stroke-width="0.81" stroke-dasharray="3.71 3.71" stroke-dashoffset="3.71"/>
<line x1="633.3" y1="705.6" x2="663.1" y2="727.2" stroke-width="0.81" stroke-dasharray="3.71 3.71" stroke-dashoffset="3.71"/>
<line x1="633.3" y1="731" x2="663.1" y2="752.6" stroke-width="0.81" stroke-dasharray="3.71 3.71" stroke-dashoffset="3.71"/>
<line x1="633.3" y1="756.3" x2="663.1" y2="778" stroke-width="0.81" stroke-dasharray="3.71 3.71" stroke-dashoffset="3.71"/>
<line x1="633.3" y1="781.7" x2="663.1" y2="803.3" stroke-width="0.81" stroke-dasharray="3.71 3.71" stroke-dashoffset="3.71"/>
<line x1="633.3" y1="807.1" x2="663.1" y2="828.7" stroke-width="0.81" stroke-dasharray="3.71 3.71" stroke-dashoffset="3.71"/>
<line x1="633.3" y1="832.5" x2="693.7" y2="876.3" stroke-width="0.81" stroke-dasharray="3.71 3.71" stroke-dashoffset="3.71"/>
<line x1="633.3" y1="857.9" x2="663.1" y2="879.5" stroke-width="0.81" stroke-dasharray="3.71 3.71" stroke-dashoffset="3.71"/>
<line x1="633.3" y1="883.3" x2="663.1" y2="904.9" stroke-width="0.81" stroke-dasharray="3.71 3.71" stroke-dashoffset="3.71"/>
<line x1="633.3" y1="908.6" x2="663.1" y2="930.2" stroke-width="0.81" stroke-dasharray="3.71 3.71" stroke-dashoffset="3.71"/>
<line x1="633.3" y1="934" x2="663.1" y2="955.6" stroke-width="0.81" stroke-dasharray="3.71 3.71" stroke-dashoffset="3.71"/>
<line x1="633.3" y1="959.4" x2="663.1" y2="981" stroke-width="0.81" stroke-dasharray="3.71 3.71" stroke-dashoffset="3.71"/>
<line x1="633.3" y1="984.8" x2="663.1" y2="1006.4" stroke-width="0.81" stroke-dasharray="3.71 3.71" stroke-dashoffset="3.71"/>
<line x1="595" y1="303.1" x2="595" y2="291"/>
<line x1="595" y1="291" x2="625.6" y2="313.2" stroke-width="0.81"/>
<line x1="625.6" y1="313.2" x2="625.6" y2="325.3"/>
<line x1="625.6" y1="325.3" x2="595" y2="303.1" stroke-width="0.81"/>
<line x1="595" y1="285" x2="595" y2="272.8"/>
<line x1="595" y1="272.8" x2="625.6" y2="295" stroke-width="0.81"/>
<line x1="625.6" y1="295" x2="625.6" y2="307.2"/>
<line x1="625.6" y1="307.2" x2="595" y2="285" stroke-width="0.81"/>
<line x1="595" y1="266.8" x2="625.6" y2="289" stroke-width="0.81"/>
<line x1="595" y1="49.3" x2="595" y2="37.2"/>
<line x1="595" y1="37.2" x2="625.6" y2="59.4" stroke-width="0.81"/>
<line x1="625.6" y1="59.4" x2="625.6" y2="71.5"/>
<line x1="625.6" y1="71.5" x2="595" y2="49.3" stroke-width="0.81"/>
<line x1="595" y1="31.1" x2="595" y2="19"/>
<line x1="595" y1="19" x2="625.6" y2="41.2" stroke-width="0.81"/>
<line x1="625.6" y1="41.2" x2="625.6" y2="53.3"/>
<line x1="625.6" y1="53.3" x2="595" y2="31.1" stroke-width="0.81"/>
<line x1="595" y1="0.8" x2="595" y2="13"/>
<line x1="595" y1="13" x2="606.5" y2="21.3" stroke-width="0.81"/>
<line x1="606.5" y1="21.3" x2="606.5" y2="9.2"/>
<line x1="606.5" y1="9.2" x2="625.6" y2="23" stroke-width="0.81"/>
<line x1="625.6" y1="23" x2="625.6" y2="35.2"/>
<line x1="606.5" y1="807" x2="606.5" y2="819.1"/>
<line x1="595" y1="816.9" x2="625.6" y2="839.1" stroke-width="0.81"/>
<line x1="595" y1="835" x2="595" y2="847.2"/>
<line x1="595" y1="847.2" x2="625.6" y2="869.4" stroke-width="0.81"/>
<line x1="625.6" y1="869.4" x2="625.6" y2="857.2"/>
<line x1="625.6" y1="857.2" x2="595" y2="835" stroke-width="0.81"/>
<line x1="595" y1="853.2" x2="595" y2="865.3"/>
<line x1="595" y1="865.3" x2="625.6" y2="887.5" stroke-width="0.81"/>
<line x1="625.6" y1="887.5" x2="625.6" y2="875.4"/>
<line x1="625.6" y1="875.4" x2="595" y2="853.2" stroke-width="0.81"/>
</g>
<polygon points="870,556.2 864.9,552.5 864.9,368.5 870,372.2" fill="#3e7d68"/>
<polygon points="879.2,548 870,556.2 870,372.2 879.2,363.9" fill="#5bb697"/>
<polygon points="879.2,363.9 874.1,360.2 864.9,368.5 870,372.2" fill="#80ffd5"/>
<polygon points="686.4,721.5 681.3,717.8 681.3,533.8 686.4,537.5" fill="#3e7d68"/>
<polygon points="695.6,713.3 686.4,721.5 686.4,537.5 695.6,529.2" fill="#5bb697"/>
<polygon points="695.6,529.2 690.5,525.5 681.3,533.8 686.4,537.5" fill="#80ffd5"/>
<polygon points="885.6,368.6 879.2,363.9 687.9,536.2 694.3,540.9" fill="#ffa17b"/>
<path d="M885.6 552.6 L694.3 724.9 L694.3 540.9 L885.6 368.6ZM725.6 525 L725.6 527.5 L716.2 540.9 L713.1 542.1 L713.1 539.6 L722.6 526.2ZM725.6 552.5 L725.6 555 L716.2 568.3 L713.1 569.5 L713.1 567.1 L722.6 553.7ZM725.6 580 L725.6 582.5 L716.2 595.8 L713.1 597 L713.1 594.5 L722.6 581.2ZM725.6 607.5 L725.6 610 L716.2 623.3 L713.1 624.5 L713.1 622 L722.6 608.7ZM725.6 635 L725.6 637.5 L716.2 650.8 L713.1 652 L713.1 649.5 L722.6 636.2ZM725.6 662.5 L725.6 665 L716.2 678.3 L713.1 679.5 L713.1 677 L722.6 663.7ZM752.6 500.7 L752.6 503.2 L743.1 516.6 L740.1 517.8 L740.1 515.3 L749.6 501.9ZM752.6 528.2 L752.6 530.7 L743.1 544 L740.1 545.2 L740.1 542.8 L749.6 529.4ZM752.6 555.7 L752.6 558.2 L743.1 571.5 L740.1 572.7 L740.1 570.2 L749.6 556.9ZM752.6 583.2 L752.6 585.7 L743.1 599 L740.1 600.2 L740.1 597.7 L749.6 584.4ZM752.6 610.7 L752.6 613.2 L743.1 626.5 L740.1 627.7 L740.1 625.2 L749.6 611.9ZM752.6 638.2 L752.6 640.7 L743.1 654 L740.1 655.2 L740.1 652.7 L749.6 639.4ZM779.6 476.4 L779.6 478.9 L770.1 492.3 L767.1 493.4 L767.1 491 L776.5 477.6ZM779.6 503.9 L779.6 506.4 L770.1 519.7 L767.1 520.9 L767.1 518.5 L776.5 505.1ZM779.6 531.4 L779.6 533.9 L770.1 547.2 L767.1 548.4 L767.1 545.9 L776.5 532.6ZM779.6 558.9 L779.6 561.4 L770.1 574.7 L767.1 575.9 L767.1 573.4 L776.5 560.1ZM779.6 586.4 L779.6 588.9 L770.1 602.2 L767.1 603.4 L767.1 600.9 L776.5 587.6ZM779.6 613.9 L779.6 616.4 L770.1 629.7 L767.1 630.9 L767.1 628.4 L776.5 615.1ZM806.6 452.1 L806.6 454.6 L797.1 468 L794.1 469.1 L794.1 466.7 L803.5 453.3ZM806.6 479.6 L806.6 482.1 L797.1 495.4 L794.1 496.6 L794.1 494.1 L803.5 480.8ZM806.6 507.1 L806.6 509.6 L797.1 522.9 L794.1 524.1 L794.1 521.6 L803.5 508.3ZM806.6 534.6 L806.6 537.1 L797.1 550.4 L794.1 551.6 L794.1 549.1 L803.5 535.8ZM806.6 562.1 L806.6 564.6 L797.1 577.9 L794.1 579.1 L794.1 576.6 L803.5 563.3ZM806.6 589.6 L806.6 592.1 L797.1 605.4 L794.1 606.6 L794.1 604.1 L803.5 590.8ZM833.6 427.8 L833.6 430.3 L824.1 443.6 L821 444.8 L821 442.4 L830.5 429ZM833.6 455.3 L833.6 457.8 L824.1 471.1 L821 472.3 L821 469.8 L830.5 456.5ZM833.6 482.8 L833.6 485.3 L824.1 498.6 L821 499.8 L821 497.3 L830.5 484ZM833.6 510.3 L833.6 512.8 L824.1 526.1 L821 527.3 L821 524.8 L830.5 511.5ZM833.6 537.8 L833.6 540.3 L824.1 553.6 L821 554.8 L821 552.3 L830.5 539ZM833.6 565.3 L833.6 567.7 L824.1 581.1 L821 582.3 L821 579.8 L830.5 566.5ZM860.6 403.5 L860.6 406 L851.1 419.3 L848 420.5 L848 418.1 L857.5 404.7ZM860.6 431 L860.6 433.5 L851.1 446.8 L848 448 L848 445.5 L857.5 432.2ZM860.6 458.5 L860.6 461 L851.1 474.3 L848 475.5 L848 473 L857.5 459.7ZM860.6 486 L860.6 488.5 L851.1 501.8 L848 503 L848 500.5 L857.5 487.2ZM860.6 513.5 L860.6 516 L851.1 529.3 L848 530.5 L848 528 L857.5 514.7ZM860.6 541 L860.6 543.4 L851.1 556.8 L848 558 L848 555.5 L857.5 542.2Z" fill="#b67257" fill-rule="evenodd"/>
<polygon points="725.6,527.5 725.6,525 732,522.5 732,522.5 732,532.2" fill="#7d4f3c"/>
<polygon points="716.2,540.9 725.6,527.5 732,532.2 722.6,545.5" fill="#ffa77f"/>
<polygon points="713.1,549.2 713.1,542.1 716.2,540.9 722.6,545.5 713.1,549.2" fill="#c0785c"/>
<polygon points="732,522.5 722.6,526.2 722.6,526.2 722.6,526.2 732,522.5" fill="#7d4f3c"/>
<polygon points="725.6,555 725.6,552.5 732,550 732,550 732,559.6" fill="#7d4f3c"/>
<polygon points="716.2,568.3 725.6,555 732,559.6 722.6,573" fill="#ffa77f"/>
<polygon points="713.1,576.7 713.1,569.5 716.2,568.3 722.6,573 713.1,576.7" fill="#c0785c"/>
<polygon points="732,550 722.6,553.7 722.6,553.7 722.6,553.7 732,550" fill="#7d4f3c"/>
<polygon points="725.6,582.5 725.6,580 732,577.5 732,577.5 732,587.1" fill="#7d4f3c"/>
<polygon points="716.2,595.8 725.6,582.5 732,587.1 722.6,600.5" fill="#ffa77f"/>
<polygon points="713.1,604.2 713.1,597 716.2,595.8 722.6,600.5 713.1,604.2" fill="#c0785c"/>
<polygon points="732,577.5 722.6,581.2 722.6,581.2 722.6,581.2 732,577.5" fill="#7d4f3c"/>
<polygon points="725.6,610 725.6,607.5 732,605 732,605 732,614.6" fill="#7d4f3c"/>
<polygon points="716.2,623.3 725.6,610 732,614.6 722.6,628" fill="#ffa77f"/>
<polygon points="713.1,631.7 713.1,624.5 716.2,623.3 722.6,628 713.1,631.7" fill="#c0785c"/>
<polygon points="732,605 722.6,608.7 722.6,608.7 722.6,608.7 732,605" fill="#7d4f3c"/>
<polygon points="725.6,637.5 725.6,635 732,632.5 732,632.5 732,642.1" fill="#7d4f3c"/>
<polygon points="716.2,650.8 725.6,637.5 732,642.1 722.6,655.5" fill="#ffa77f"/>
<polygon points="713.1,659.2 713.1,652 716.2,650.8 722.6,655.5 713.1,659.2" fill="#c0785c"/>
<polygon points="732,632.5 722.6,636.2 722.6,636.2 722.6,636.2 732,632.5" fill="#7d4f3c"/>
<polygon points="725.6,665 725.6,662.5 732,660 732,660 732,669.6" fill="#7d4f3c"/>
<polygon points="716.2,678.3 725.6,665 732,669.6 722.6,683" fill="#ffa77f"/>
<polygon points="713.1,686.7 713.1,679.5 716.2,678.3 722.6,683 713.1,686.7" fill="#c0785c"/>
<polygon points="732,660 722.6,663.7 722.6,663.7 722.6,663.7 732,660" fill="#7d4f3c"/>
<polygon points="752.6,503.2 752.6,500.7 759,498.2 759,498.2 759,507.9" fill="#7d4f3c"/>
<polygon points="743.1,516.6 752.6,503.2 759,507.9 749.6,521.2" fill="#ffa77f"/>
<polygon points="740.1,524.9 740.1,517.8 743.1,516.6 749.6,521.2 740.1,524.9" fill="#c0785c"/>
<polygon points="759,498.2 749.6,501.9 749.6,501.9 749.6,501.9 759,498.2" fill="#7d4f3c"/>
<polygon points="752.6,530.7 752.6,528.2 759,525.7 759,525.7 759,535.3" fill="#7d4f3c"/>
<polygon points="743.1,544 752.6,530.7 759,535.3 749.6,548.7" fill="#ffa77f"/>
<polygon points="740.1,552.4 740.1,545.2 743.1,544 749.6,548.7 740.1,552.4" fill="#c0785c"/>
<polygon points="759,525.7 749.6,529.4 749.6,529.4 749.6,529.4 759,525.7" fill="#7d4f3c"/>
<polygon points="752.6,558.2 752.6,555.7 759,553.2 759,553.2 759,562.8" fill="#7d4f3c"/>
<polygon points="743.1,571.5 752.6,558.2 759,562.8 749.6,576.2" fill="#ffa77f"/>
<polygon points="740.1,579.9 740.1,572.7 743.1,571.5 749.6,576.2 740.1,579.9" fill="#c0785c"/>
<polygon points="759,553.2 749.6,556.9 749.6,556.9 749.6,556.9 759,553.2" fill="#7d4f3c"/>
<polygon points="752.6,585.7 752.6,583.2 759,580.7 759,580.7 759,590.3" fill="#7d4f3c"/>
<polygon points="743.1,599 752.6,585.7 759,590.3 749.6,603.7" fill="#ffa77f"/>
<polygon points="740.1,607.4 740.1,600.2 743.1,599 749.6,603.7 740.1,607.4" fill="#c0785c"/>
<polygon points="759,580.7 749.6,584.4 749.6,584.4 749.6,584.4 759,580.7" fill="#7d4f3c"/>
<polygon points="752.6,613.2 752.6,610.7 759,608.2 759,608.2 759,617.8" fill="#7d4f3c"/>
<polygon points="743.1,626.5 752.6,613.2 759,617.8 749.6,631.2" fill="#ffa77f"/>
<polygon points="740.1,634.9 740.1,627.7 743.1,626.5 749.6,631.2 740.1,634.9" fill="#c0785c"/>
<polygon points="759,608.2 749.6,611.9 749.6,611.9 749.6,611.9 759,608.2" fill="#7d4f3c"/>
<polygon points="752.6,640.7 752.6,638.2 759,635.7 759,635.7 759,645.3" fill="#7d4f3c"/>
<polygon points="743.1,654 752.6,640.7 759,645.3 749.6,658.7" fill="#ffa77f"/>
<polygon points="740.1,662.4 740.1,655.2 743.1,654 749.6,658.7 740.1,662.4" fill="#c0785c"/>
<polygon points="759,635.7 749.6,639.4 749.6,639.4 749.6,639.4 759,635.7" fill="#7d4f3c"/>
<polygon points="779.6,478.9 779.6,476.4 786,473.9 786,473.9 786,483.6" fill="#7d4f3c"/>
<polygon points="770.1,492.3 779.6,478.9 786,483.6 776.5,496.9" fill="#ffa77f"/>
<polygon points="767.1,500.6 767.1,493.4 770.1,492.3 776.5,496.9 767.1,500.6" fill="#c0785c"/>
<polygon points="786,473.9 776.5,477.6 776.5,477.6 776.5,477.6 786,473.9" fill="#7d4f3c"/>
<polygon points="779.6,506.4 779.6,503.9 786,501.4 786,501.4 786,511" fill="#7d4f3c"/>
<polygon points="770.1,519.7 779.6,506.4 786,511 776.5,524.4" fill="#ffa77f"/>
<polygon points="767.1,528.1 767.1,520.9 770.1,519.7 776.5,524.4 767.1,528.1" fill="#c0785c"/>
<polygon points="786,501.4 776.5,505.1 776.5,505.1 776.5,505.1 786,501.4" fill="#7d4f3c"/>
<polygon points="779.6,533.9 779.6,531.4 786,528.9 786,528.9 786,538.5" fill="#7d4f3c"/>
<polygon points="770.1,547.2 779.6,533.9 786,538.5 776.5,551.9" fill="#ffa77f"/>
<polygon points="767.1,555.6 767.1,548.4 770.1,547.2 776.5,551.9 767.1,555.6" fill="#c0785c"/>
<polygon points="786,528.9 776.5,532.6 776.5,532.6 776.5,532.6 786,528.9" fill="#7d4f3c"/>
<polygon points="779.6,561.4 779.6,558.9 786,556.4 786,556.4 786,566" fill="#7d4f3c"/>
<polygon points="770.1,574.7 779.6,561.4 786,566 776.5,579.4" fill="#ffa77f"/>
<polygon points="767.1,583.1 767.1,575.9 770.1,574.7 776.5,579.4 767.1,583.1" fill="#c0785c"/>
<polygon points="786,556.4 776.5,560.1 776.5,560.1 776.5,560.1 786,556.4" fill="#7d4f3c"/>
<polygon points="779.6,588.9 779.6,586.4 786,583.9 786,583.9 786,593.5" fill="#7d4f3c"/>
<polygon points="770.1,602.2 779.6,588.9 786,593.5 776.5,606.9" fill="#ffa77f"/>
<polygon points="767.1,610.6 767.1,603.4 770.1,602.2 776.5,606.9 767.1,610.6" fill="#c0785c"/>
<polygon points="786,583.9 776.5,587.6 776.5,587.6 776.5,587.6 786,583.9" fill="#7d4f3c"/>
<polygon points="779.6,616.4 779.6,613.9 786,611.4 786,611.4 786,621" fill="#7d4f3c"/>
<polygon points="770.1,629.7 779.6,616.4 786,621 776.5,634.4" fill="#ffa77f"/>
<polygon points="767.1,638.1 767.1,630.9 770.1,629.7 776.5,634.4 767.1,638.1" fill="#c0785c"/>
<polygon points="786,611.4 776.5,615.1 776.5,615.1 776.5,615.1 786,611.4" fill="#7d4f3c"/>
<polygon points="806.6,454.6 806.6,452.1 813,449.6 813,449.6 813,459.3" fill="#7d4f3c"/>
<polygon points="797.1,468 806.6,454.6 813,459.3 803.5,472.6" fill="#ffa77f"/>
<polygon points="794.1,476.3 794.1,469.1 797.1,468 803.5,472.6 794.1,476.3" fill="#c0785c"/>
<polygon points="813,449.6 803.5,453.3 803.5,453.3 803.5,453.3 813,449.6" fill="#7d4f3c"/>
<polygon points="806.6,482.1 806.6,479.6 813,477.1 813,477.1 813,486.7" fill="#7d4f3c"/>
<polygon points="797.1,495.4 806.6,482.1 813,486.7 803.5,500.1" fill="#ffa77f"/>
<polygon points="794.1,503.8 794.1,496.6 797.1,495.4 803.5,500.1 794.1,503.8" fill="#c0785c"/>
<polygon points="813,477.1 803.5,480.8 803.5,480.8 803.5,480.8 813,477.1" fill="#7d4f3c"/>
<polygon points="806.6,509.6 806.6,507.1 813,504.6 813,504.6 813,514.2" fill="#7d4f3c"/>
<polygon points="797.1,522.9 806.6,509.6 813,514.2 803.5,527.6" fill="#ffa77f"/>
<polygon points="794.1,531.3 794.1,524.1 797.1,522.9 803.5,527.6 794.1,531.3" fill="#c0785c"/>
<polygon points="813,504.6 803.5,508.3 803.5,508.3 803.5,508.3 813,504.6" fill="#7d4f3c"/>
<polygon points="806.6,537.1 806.6,534.6 813,532.1 813,532.1 813,541.7" fill="#7d4f3c"/>
<polygon points="797.1,550.4 806.6,537.1 813,541.7 803.5,555.1" fill="#ffa77f"/>
<polygon points="794.1,558.8 794.1,551.6 797.1,550.4 803.5,555.1 794.1,558.8" fill="#c0785c"/>
<polygon points="813,532.1 803.5,535.8 803.5,535.8 803.5,535.8 813,532.1" fill="#7d4f3c"/>
<polygon points="806.6,564.6 806.6,562.1 813,559.6 813,559.6 813,569.2" fill="#7d4f3c"/>
<polygon points="797.1,577.9 806.6,564.6 813,569.2 803.5,582.6" fill="#ffa77f"/>
<polygon points="794.1,586.3 794.1,579.1 797.1,577.9 803.5,582.6 794.1,586.3" fill="#c0785c"/>
<polygon points="813,559.6 803.5,563.3 803.5,563.3 803.5,563.3 813,559.6" fill="#7d4f3c"/>
<polygon points="806.6,592.1 806.6,589.6 813,587.1 813,587.1 813,596.7" fill="#7d4f3c"/>
<polygon points="797.1,605.4 806.6,592.1 813,596.7 803.5,610" fill="#ffa77f"/>
<polygon points="794.1,613.8 794.1,606.6 797.1,605.4 803.5,610 794.1,613.8" fill="#c0785c"/>
<polygon points="813,587.1 803.5,590.8 803.5,590.8 803.5,590.8 813,587.1" fill="#7d4f3c"/>
<polygon points="833.6,430.3 833.6,427.8 840,425.3 840,425.3 840,435" fill="#7d4f3c"/>
<polygon points="824.1,443.6 833.6,430.3 840,435 830.5,448.3" fill="#ffa77f"/>
<polygon points="821,452 821,444.8 824.1,443.6 830.5,448.3 821,452" fill="#c0785c"/>
<polygon points="840,425.3 830.5,429 830.5,429 830.5,429 840,425.3" fill="#7d4f3c"/>
<polygon points="833.6,457.8 833.6,455.3 840,452.8 840,452.8 840,462.4" fill="#7d4f3c"/>
<polygon points="824.1,471.1 833.6,457.8 840,462.4 830.5,475.8" fill="#ffa77f"/>
<polygon points="821,479.5 821,472.3 824.1,471.1 830.5,475.8 821,479.5" fill="#c0785c"/>
<polygon points="840,452.8 830.5,456.5 830.5,456.5 830.5,456.5 840,452.8" fill="#7d4f3c"/>
<polygon points="833.6,485.3 833.6,482.8 840,480.3 840,480.3 840,489.9" fill="#7d4f3c"/>
<polygon points="824.1,498.6 833.6,485.3 840,489.9 830.5,503.3" fill="#ffa77f"/>
<polygon points="821,507 821,499.8 824.1,498.6 830.5,503.3 821,507" fill="#c0785c"/>
<polygon points="840,480.3 830.5,484 830.5,484 830.5,484 840,480.3" fill="#7d4f3c"/>
<polygon points="833.6,512.8 833.6,510.3 840,507.8 840,507.8 840,517.4" fill="#7d4f3c"/>
<polygon points="824.1,526.1 833.6,512.8 840,517.4 830.5,530.8" fill="#ffa77f"/>
<polygon points="821,534.5 821,527.3 824.1,526.1 830.5,530.8 821,534.5" fill="#c0785c"/>
<polygon points="840,507.8 830.5,511.5 830.5,511.5 830.5,511.5 840,507.8" fill="#7d4f3c"/>
<polygon points="833.6,540.3 833.6,537.8 840,535.3 840,535.3 840,544.9" fill="#7d4f3c"/>
<polygon points="824.1,553.6 833.6,540.3 840,544.9 830.5,558.3" fill="#ffa77f"/>
<polygon points="821,562 821,554.8 824.1,553.6 830.5,558.3 821,562" fill="#c0785c"/>
<polygon points="840,535.3 830.5,539 830.5,539 830.5,539 840,535.3" fill="#7d4f3c"/>
<polygon points="833.6,567.7 833.6,565.3 840,562.8 840,562.8 840,572.4" fill="#7d4f3c"/>
<polygon points="824.1,581.1 833.6,567.7 840,572.4 830.5,585.7" fill="#ffa77f"/>
<polygon points="821,589.5 821,582.3 824.1,581.1 830.5,585.7 821,589.5" fill="#c0785c"/>
<polygon points="840,562.8 830.5,566.5 830.5,566.5 830.5,566.5 840,562.8" fill="#7d4f3c"/>
<polygon points="860.6,406 860.6,403.5 867,401 867,401 867,410.6" fill="#7d4f3c"/>
<polygon points="851.1,419.3 860.6,406 867,410.6 857.5,424" fill="#ffa77f"/>
<polygon points="848,427.7 848,420.5 851.1,419.3 857.5,424 848,427.7" fill="#c0785c"/>
<polygon points="867,401 857.5,404.7 857.5,404.7 857.5,404.7 867,401" fill="#7d4f3c"/>
<polygon points="860.6,433.5 860.6,431 867,428.5 867,428.5 867,438.1" fill="#7d4f3c"/>
<polygon points="851.1,446.8 860.6,433.5 867,438.1 857.5,451.5" fill="#ffa77f"/>
<polygon points="848,455.2 848,448 851.1,446.8 857.5,451.5 848,455.2" fill="#c0785c"/>
<polygon points="867,428.5 857.5,432.2 857.5,432.2 857.5,432.2 867,428.5" fill="#7d4f3c"/>
<polygon points="860.6,461 860.6,458.5 867,456 867,456 867,465.6" fill="#7d4f3c"/>
<polygon points="851.1,474.3 860.6,461 867,465.6 857.5,479" fill="#ffa77f"/>
<polygon points="848,482.7 848,475.5 851.1,474.3 857.5,479 848,482.7" fill="#c0785c"/>
<polygon points="867,456 857.5,459.7 857.5,459.7 857.5,459.7 867,456" fill="#7d4f3c"/>
<polygon points="860.6,488.5 860.6,486 867,483.5 867,483.5 867,493.1" fill="#7d4f3c"/>
<polygon points="851.1,501.8 860.6,488.5 867,493.1 857.5,506.5" fill="#ffa77f"/>
<polygon points="848,510.2 848,503 851.1,501.8 857.5,506.5 848,510.2" fill="#c0785c"/>
<polygon points="867,483.5 857.5,487.2 857.5,487.2 857.5,487.2 867,483.5" fill="#7d4f3c"/>
<polygon points="860.6,516 860.6,513.5 867,511 867,511 867,520.6" fill="#7d4f3c"/>
<polygon points="851.1,529.3 860.6,516 867,520.6 857.5,534" fill="#ffa77f"/>
<polygon points="848,537.7 848,530.5 851.1,529.3 857.5,534 848,537.7" fill="#c0785c"/>
<polygon points="867,511 857.5,514.7 857.5,514.7 857.5,514.7 867,511" fill="#7d4f3c"/>
<polygon points="860.6,543.4 860.6,541 867,538.5 867,538.5 867,548.1" fill="#7d4f3c"/>
<polygon points="851.1,556.8 860.6,543.4 867,548.1 857.5,561.4" fill="#ffa77f"/>
<polygon points="848,565.1 848,558 851.1,556.8 857.5,561.4 848,565.1" fill="#c0785c"/>
<polygon points="867,538.5 857.5,542.2 857.5,542.2 857.5,542.2 867,538.5" fill="#7d4f3c"/>
<polygon points="883.1,565.8 878,562.1 878,378 883.1,381.8" fill="#007d66"/>
<polygon points="892.3,557.5 883.1,565.8 883.1,381.8 892.3,373.5" fill="#00b695"/>
<polygon points="892.3,373.5 887.2,369.7 878,378 883.1,381.8" fill="#00ffd1"/>
<polygon points="708.8,722.8 703.7,719.1 703.7,710.9 708.8,714.7" fill="#007d66"/>
<polygon points="883.1,565.8 708.8,722.8 708.8,714.7 883.1,557.7" fill="#00b695"/>
<polygon points="883.1,557.7 878,553.9 703.7,710.9 708.8,714.7" fill="#00ffd1"/>
<polygon points="699.6,731.1 694.5,727.4 694.5,543.3 699.6,547" fill="#007d66"/>
<polygon points="708.8,722.8 699.6,731.1 699.6,547 708.8,538.8" fill="#00b695"/>
<polygon points="708.8,538.8 703.7,535 694.5,543.3 699.6,547" fill="#00ffd1"/>
<polygon points="1073.1,703.5 1067.9,699.7 1067.9,515.7 1073.1,519.4" fill="#3e7d68"/>
<polygon points="1082.3,695.2 1073.1,703.5 1073.1,519.4 1082.3,511.2" fill="#5bb697"/>
<polygon points="1082.3,511.2 1077.1,507.4 1067.9,515.7 1073.1,519.4" fill="#80ffd5"/>
<polygon points="889.5,868.8 884.4,865 884.4,681 889.5,684.7" fill="#3e7d68"/>
<polygon points="898.7,860.5 889.5,868.8 889.5,684.7 898.7,676.4" fill="#5bb697"/>
<polygon points="898.7,676.4 893.6,672.7 884.4,681 889.5,684.7" fill="#80ffd5"/>
<polygon points="1088.7,515.8 1082.3,511.2 890.9,683.4 897.4,688.1" fill="#ffa17b"/>
<path d="M1088.7 699.8 L897.4 872.1 L897.4 688.1 L1088.7 515.8ZM928.7 672.2 L928.7 674.7 L919.2 688.1 L916.2 689.3 L916.2 686.8 L925.6 673.4ZM928.7 699.7 L928.7 702.2 L919.2 715.6 L916.2 716.8 L916.2 714.3 L925.6 700.9ZM928.7 727.2 L928.7 729.7 L919.2 743.1 L916.2 744.3 L916.2 741.8 L925.6 728.4ZM928.7 754.7 L928.7 757.2 L919.2 770.5 L916.2 771.7 L916.2 769.3 L925.6 755.9ZM928.7 782.2 L928.7 784.7 L919.2 798 L916.2 799.2 L916.2 796.7 L925.6 783.4ZM928.7 809.7 L928.7 812.2 L919.2 825.5 L916.2 826.7 L916.2 824.2 L925.6 810.9ZM955.7 647.9 L955.7 650.4 L946.2 663.8 L943.2 665 L943.2 662.5 L952.6 649.1ZM955.7 675.4 L955.7 677.9 L946.2 691.3 L943.2 692.5 L943.2 690 L952.6 676.6ZM955.7 702.9 L955.7 705.4 L946.2 718.8 L943.2 719.9 L943.2 717.5 L952.6 704.1ZM955.7 730.4 L955.7 732.9 L946.2 746.2 L943.2 747.4 L943.2 745 L952.6 731.6ZM982.7 623.6 L982.7 626.1 L973.2 639.5 L970.1 640.7 L970.1 638.2 L979.6 624.8ZM982.7 651.1 L982.7 653.6 L973.2 667 L970.1 668.2 L970.1 665.7 L979.6 652.3ZM982.7 678.6 L982.7 681.1 L973.2 694.5 L970.1 695.6 L970.1 693.2 L979.6 679.8ZM982.7 706.1 L982.7 708.6 L973.2 721.9 L970.1 723.1 L970.1 720.6 L979.6 707.3ZM1009.7 599.3 L1009.7 601.8 L1000.2 615.2 L997.1 616.4 L997.1 613.9 L1006.6 600.5ZM1009.7 626.8 L1009.7 629.3 L1000.2 642.7 L997.1 643.9 L997.1 641.4 L1006.6 628ZM1009.7 654.3 L1009.7 656.8 L1000.2 670.2 L997.1 671.3 L997.1 668.9 L1006.6 655.5ZM1009.7 681.8 L1009.7 684.3 L1000.2 697.6 L997.1 698.8 L997.1 696.3 L1006.6 683ZM1009.7 709.3 L1009.7 711.8 L1000.2 725.1 L997.1 726.3 L997.1 723.8 L1006.6 710.5ZM1009.7 736.8 L1009.7 739.3 L1000.2 752.6 L997.1 753.8 L997.1 751.3 L1006.6 738ZM1036.6 575 L1036.6 577.5 L1027.2 590.9 L1024.1 592.1 L1024.1 589.6 L1033.6 576.2ZM1036.6 602.5 L1036.6 605 L1027.2 618.4 L1024.1 619.6 L1024.1 617.1 L1033.6 603.7ZM1036.6 630 L1036.6 632.5 L1027.2 645.8 L1024.1 647 L1024.1 644.6 L1033.6 631.2ZM1036.6 657.5 L1036.6 660 L1027.2 673.3 L1024.1 674.5 L1024.1 672 L1033.6 658.7ZM1036.6 685 L1036.6 687.5 L1027.2 700.8 L1024.1 702 L1024.1 699.5 L1033.6 686.2ZM1036.6 712.5 L1036.6 715 L1027.2 728.3 L1024.1 729.5 L1024.1 727 L1033.6 713.7ZM1063.6 550.7 L1063.6 553.2 L1054.2 566.6 L1051.1 567.8 L1051.1 565.3 L1060.6 551.9ZM1063.6 578.2 L1063.6 580.7 L1054.2 594.1 L1051.1 595.3 L1051.1 592.8 L1060.6 579.4ZM1063.6 605.7 L1063.6 608.2 L1054.2 621.5 L1051.1 622.7 L1051.1 620.3 L1060.6 606.9ZM1063.6 633.2 L1063.6 635.7 L1054.2 649 L1051.1 650.2 L1051.1 647.7 L1060.6 634.4ZM1063.6 660.7 L1063.6 663.2 L1054.2 676.5 L1051.1 677.7 L1051.1 675.2 L1060.6 661.9ZM1063.6 688.2 L1063.6 690.7 L1054.2 704 L1051.1 705.2 L1051.1 702.7 L1060.6 689.4ZM958.1 817.4 L969.6 807.1 L969.6 744.9 L958.1 755.3Z" fill="#b67257" fill-rule="evenodd"/>
<polygon points="928.7,674.7 928.7,672.2 935.1,669.7 935.1,669.7 935.1,679.4" fill="#7d4f3c"/>
<polygon points="919.2,688.1 928.7,674.7 935.1,679.4 925.6,692.7" fill="#ffa77f"/>
<polygon points="916.2,696.4 916.2,689.3 919.2,688.1 925.6,692.7 916.2,696.4" fill="#c0785c"/>
<polygon points="935.1,669.7 925.6,673.4 925.6,673.4 925.6,673.4 935.1,669.7" fill="#7d4f3c"/>
<polygon points="928.7,702.2 928.7,699.7 935.1,697.2 935.1,697.2 935.1,706.9" fill="#7d4f3c"/>
<polygon points="919.2,715.6 928.7,702.2 935.1,706.9 925.6,720.2" fill="#ffa77f"/>
<polygon points="916.2,723.9 916.2,716.8 919.2,715.6 925.6,720.2 916.2,723.9" fill="#c0785c"/>
<polygon points="935.1,697.2 925.6,700.9 925.6,700.9 925.6,700.9 935.1,697.2" fill="#7d4f3c"/>
<polygon points="928.7,729.7 928.7,727.2 935.1,724.7 935.1,724.7 935.1,734.4" fill="#7d4f3c"/>
<polygon points="919.2,743.1 928.7,729.7 935.1,734.4 925.6,747.7" fill="#ffa77f"/>
<polygon points="916.2,751.4 916.2,744.3 919.2,743.1 925.6,747.7 916.2,751.4" fill="#c0785c"/>
<polygon points="935.1,724.7 925.6,728.4 925.6,728.4 925.6,728.4 935.1,724.7" fill="#7d4f3c"/>
<polygon points="928.7,757.2 928.7,754.7 935.1,752.2 935.1,752.2 935.1,761.8" fill="#7d4f3c"/>
<polygon points="919.2,770.5 928.7,757.2 935.1,761.8 925.6,775.2" fill="#ffa77f"/>
<polygon points="916.2,778.9 916.2,771.7 919.2,770.5 925.6,775.2 916.2,778.9" fill="#c0785c"/>
<polygon points="935.1,752.2 925.6,755.9 925.6,755.9 925.6,755.9 935.1,752.2" fill="#7d4f3c"/>
<polygon points="928.7,784.7 928.7,782.2 935.1,779.7 935.1,779.7 935.1,789.3" fill="#7d4f3c"/>
<polygon points="919.2,798 928.7,784.7 935.1,789.3 925.6,802.7" fill="#ffa77f"/>
<polygon points="916.2,806.4 916.2,799.2 919.2,798 925.6,802.7 916.2,806.4" fill="#c0785c"/>
<polygon points="935.1,779.7 925.6,783.4 925.6,783.4 925.6,783.4 935.1,779.7" fill="#7d4f3c"/>
<polygon points="928.7,812.2 928.7,809.7 935.1,807.2 935.1,807.2 935.1,816.8" fill="#7d4f3c"/>
<polygon points="919.2,825.5 928.7,812.2 935.1,816.8 925.6,830.2" fill="#ffa77f"/>
<polygon points="916.2,833.9 916.2,826.7 919.2,825.5 925.6,830.2 916.2,833.9" fill="#c0785c"/>
<polygon points="935.1,807.2 925.6,810.9 925.6,810.9 925.6,810.9 935.1,807.2" fill="#7d4f3c"/>
<polygon points="955.7,650.4 955.7,647.9 962.1,645.4 962.1,645.4 962.1,655.1" fill="#7d4f3c"/>
<polygon points="946.2,663.8 955.7,650.4 962.1,655.1 952.6,668.4" fill="#ffa77f"/>
<polygon points="943.2,672.1 943.2,665 946.2,663.8 952.6,668.4 943.2,672.1" fill="#c0785c"/>
<polygon points="962.1,645.4 952.6,649.1 952.6,649.1 952.6,649.1 962.1,645.4" fill="#7d4f3c"/>
<polygon points="955.7,677.9 955.7,675.4 962.1,672.9 962.1,672.9 962.1,682.6" fill="#7d4f3c"/>
<polygon points="946.2,691.3 955.7,677.9 962.1,682.6 952.6,695.9" fill="#ffa77f"/>
<polygon points="943.2,699.6 943.2,692.5 946.2,691.3 952.6,695.9 943.2,699.6" fill="#c0785c"/>
<polygon points="962.1,672.9 952.6,676.6 952.6,676.6 952.6,676.6 962.1,672.9" fill="#7d4f3c"/>
<polygon points="955.7,705.4 955.7,702.9 962.1,700.4 962.1,700.4 962.1,710.1" fill="#7d4f3c"/>
<polygon points="946.2,718.8 955.7,705.4 962.1,710.1 952.6,723.4" fill="#ffa77f"/>
<polygon points="943.2,727.1 943.2,719.9 946.2,718.8 952.6,723.4 943.2,727.1" fill="#c0785c"/>
<polygon points="962.1,700.4 952.6,704.1 952.6,704.1 952.6,704.1 962.1,700.4" fill="#7d4f3c"/>
<polygon points="955.7,732.9 955.7,730.4 962.1,727.9 962.1,727.9 962.1,737.5" fill="#7d4f3c"/>
<polygon points="946.2,746.2 955.7,732.9 962.1,737.5 952.6,750.9" fill="#ffa77f"/>
<polygon points="943.2,754.6 943.2,747.4 946.2,746.2 952.6,750.9 943.2,754.6" fill="#c0785c"/>
<polygon points="962.1,727.9 952.6,731.6 952.6,731.6 952.6,731.6 962.1,727.9" fill="#7d4f3c"/>
<polygon points="982.7,626.1 982.7,623.6 989.1,621.1 989.1,621.1 989.1,630.8" fill="#7d4f3c"/>
<polygon points="973.2,639.5 982.7,626.1 989.1,630.8 979.6,644.1" fill="#ffa77f"/>
<polygon points="970.1,647.8 970.1,640.7 973.2,639.5 979.6,644.1 970.1,647.8" fill="#c0785c"/>
<polygon points="989.1,621.1 979.6,624.8 979.6,624.8 979.6,624.8 989.1,621.1" fill="#7d4f3c"/>
<polygon points="982.7,653.6 982.7,651.1 989.1,648.6 989.1,648.6 989.1,658.3" fill="#7d4f3c"/>
<polygon points="973.2,667 982.7,653.6 989.1,658.3 979.6,671.6" fill="#ffa77f"/>
<polygon points="970.1,675.3 970.1,668.2 973.2,667 979.6,671.6 970.1,675.3" fill="#c0785c"/>
<polygon points="989.1,648.6 979.6,652.3 979.6,652.3 979.6,652.3 989.1,648.6" fill="#7d4f3c"/>
<polygon points="982.7,681.1 982.7,678.6 989.1,676.1 989.1,676.1 989.1,685.8" fill="#7d4f3c"/>
<polygon points="973.2,694.5 982.7,681.1 989.1,685.8 979.6,699.1" fill="#ffa77f"/>
<polygon points="970.1,702.8 970.1,695.6 973.2,694.5 979.6,699.1 970.1,702.8" fill="#c0785c"/>
<polygon points="989.1,676.1 979.6,679.8 979.6,679.8 979.6,679.8 989.1,676.1" fill="#7d4f3c"/>
<polygon points="982.7,708.6 982.7,706.1 989.1,703.6 989.1,703.6 989.1,713.2" fill="#7d4f3c"/>
<polygon points="973.2,721.9 982.7,708.6 989.1,713.2 979.6,726.6" fill="#ffa77f"/>
<polygon points="970.1,730.3 970.1,723.1 973.2,721.9 979.6,726.6 970.1,730.3" fill="#c0785c"/>
<polygon points="989.1,703.6 979.6,707.3 979.6,707.3 979.6,707.3 989.1,703.6" fill="#7d4f3c"/>
<polygon points="1009.7,601.8 1009.7,599.3 1016.1,596.8 1016.1,596.8 1016.1,606.5" fill="#7d4f3c"/>
<polygon points="1000.2,615.2 1009.7,601.8 1016.1,606.5 1006.6,619.8" fill="#ffa77f"/>
<polygon points="997.1,623.5 997.1,616.4 1000.2,615.2 1006.6,619.8 997.1,623.5" fill="#c0785c"/>
<polygon points="1016.1,596.8 1006.6,600.5 1006.6,600.5 1006.6,600.5 1016.1,596.8" fill="#7d4f3c"/>
<polygon points="1009.7,629.3 1009.7,626.8 1016.1,624.3 1016.1,624.3 1016.1,634" fill="#7d4f3c"/>
<polygon points="1000.2,642.7 1009.7,629.3 1016.1,634 1006.6,647.3" fill="#ffa77f"/>
<polygon points="997.1,651 997.1,643.9 1000.2,642.7 1006.6,647.3 997.1,651" fill="#c0785c"/>
<polygon points="1016.1,624.3 1006.6,628 1006.6,628 1006.6,628 1016.1,624.3" fill="#7d4f3c"/>
<polygon points="1009.7,656.8 1009.7,654.3 1016.1,651.8 1016.1,651.8 1016.1,661.5" fill="#7d4f3c"/>
<polygon points="1000.2,670.2 1009.7,656.8 1016.1,661.5 1006.6,674.8" fill="#ffa77f"/>
<polygon points="997.1,678.5 997.1,671.3 1000.2,670.2 1006.6,674.8 997.1,678.5" fill="#c0785c"/>
<polygon points="1016.1,651.8 1006.6,655.5 1006.6,655.5 1006.6,655.5 1016.1,651.8" fill="#7d4f3c"/>
<polygon points="1009.7,684.3 1009.7,681.8 1016.1,679.3 1016.1,679.3 1016.1,688.9" fill="#7d4f3c"/>
<polygon points="1000.2,697.6 1009.7,684.3 1016.1,688.9 1006.6,702.3" fill="#ffa77f"/>
<polygon points="997.1,706 997.1,698.8 1000.2,697.6 1006.6,702.3 997.1,706" fill="#c0785c"/>
<polygon points="1016.1,679.3 1006.6,683 1006.6,683 1006.6,683 1016.1,679.3" fill="#7d4f3c"/>
<polygon points="1009.7,711.8 1009.7,709.3 1016.1,706.8 1016.1,706.8 1016.1,716.4" fill="#7d4f3c"/>
<polygon points="1000.2,725.1 1009.7,711.8 1016.1,716.4 1006.6,729.8" fill="#ffa77f"/>
<polygon points="997.1,733.5 997.1,726.3 1000.2,725.1 1006.6,729.8 997.1,733.5" fill="#c0785c"/>
<polygon points="1016.1,706.8 1006.6,710.5 1006.6,710.5 1006.6,710.5 1016.1,706.8" fill="#7d4f3c"/>
<polygon points="1009.7,739.3 1009.7,736.8 1016.1,734.3 1016.1,734.3 1016.1,743.9" fill="#7d4f3c"/>
<polygon points="1000.2,752.6 1009.7,739.3 1016.1,743.9 1006.6,757.3" fill="#ffa77f"/>
<polygon points="997.1,761 997.1,753.8 1000.2,752.6 1006.6,757.3 997.1,761" fill="#c0785c"/>
<polygon points="1016.1,734.3 1006.6,738 1006.6,738 1006.6,738 1016.1,734.3" fill="#7d4f3c"/>
<polygon points="1036.6,577.5 1036.6,575 1043.1,572.5 1043.1,572.5 1043.1,582.2" fill="#7d4f3c"/>
<polygon points="1027.2,590.9 1036.6,577.5 1043.1,582.2 1033.6,595.5" fill="#ffa77f"/>
<polygon points="1024.1,599.2 1024.1,592.1 1027.2,590.9 1033.6,595.5 1024.1,599.2" fill="#c0785c"/>
<polygon points="1043.1,572.5 1033.6,576.2 1033.6,576.2 1033.6,576.2 1043.1,572.5" fill="#7d4f3c"/>
<polygon points="1036.6,605 1036.6,602.5 1043.1,600 1043.1,600 1043.1,609.7" fill="#7d4f3c"/>
<polygon points="1027.2,618.4 1036.6,605 1043.1,609.7 1033.6,623" fill="#ffa77f"/>
<polygon points="1024.1,626.7 1024.1,619.6 1027.2,618.4 1033.6,623 1024.1,626.7" fill="#c0785c"/>
<polygon points="1043.1,600 1033.6,603.7 1033.6,603.7 1033.6,603.7 1043.1,600" fill="#7d4f3c"/>
<polygon points="1036.6,632.5 1036.6,630 1043.1,627.5 1043.1,627.5 1043.1,637.1" fill="#7d4f3c"/>
<polygon points="1027.2,645.8 1036.6,632.5 1043.1,637.1 1033.6,650.5" fill="#ffa77f"/>
<polygon points="1024.1,654.2 1024.1,647 1027.2,645.8 1033.6,650.5 1024.1,654.2" fill="#c0785c"/>
<polygon points="1043.1,627.5 1033.6,631.2 1033.6,631.2 1033.6,631.2 1043.1,627.5" fill="#7d4f3c"/>
<polygon points="1036.6,660 1036.6,657.5 1043.1,655 1043.1,655 1043.1,664.6" fill="#7d4f3c"/>
<polygon points="1027.2,673.3 1036.6,660 1043.1,664.6 1033.6,678" fill="#ffa77f"/>
<polygon points="1024.1,681.7 1024.1,674.5 1027.2,673.3 1033.6,678 1024.1,681.7" fill="#c0785c"/>
<polygon points="1043.1,655 1033.6,658.7 1033.6,658.7 1033.6,658.7 1043.1,655" fill="#7d4f3c"/>
<polygon points="1036.6,687.5 1036.6,685 1043.1,682.5 1043.1,682.5 1043.1,692.1" fill="#7d4f3c"/>
<polygon points="1027.2,700.8 1036.6,687.5 1043.1,692.1 1033.6,705.5" fill="#ffa77f"/>
<polygon points="1024.1,709.2 1024.1,702 1027.2,700.8 1033.6,705.5 1024.1,709.2" fill="#c0785c"/>
<polygon points="1043.1,682.5 1033.6,686.2 1033.6,686.2 1033.6,686.2 1043.1,682.5" fill="#7d4f3c"/>
<polygon points="1036.6,715 1036.6,712.5 1043.1,710 1043.1,710 1043.1,719.6" fill="#7d4f3c"/>
<polygon points="1027.2,728.3 1036.6,715 1043.1,719.6 1033.6,733" fill="#ffa77f"/>
<polygon points="1024.1,736.7 1024.1,729.5 1027.2,728.3 1033.6,733 1024.1,736.7" fill="#c0785c"/>
<polygon points="1043.1,710 1033.6,713.7 1033.6,713.7 1033.6,713.7 1043.1,710" fill="#7d4f3c"/>
<polygon points="1063.6,553.2 1063.6,550.7 1070,548.2 1070,548.2 1070,557.9" fill="#7d4f3c"/>
<polygon points="1054.2,566.6 1063.6,553.2 1070,557.9 1060.6,571.2" fill="#ffa77f"/>
<polygon points="1051.1,574.9 1051.1,567.8 1054.2,566.6 1060.6,571.2 1051.1,574.9" fill="#c0785c"/>
<polygon points="1070,548.2 1060.6,551.9 1060.6,551.9 1060.6,551.9 1070,548.2" fill="#7d4f3c"/>
<polygon points="1063.6,580.7 1063.6,578.2 1070,575.7 1070,575.7 1070,585.4" fill="#7d4f3c"/>
<polygon points="1054.2,594.1 1063.6,580.7 1070,585.4 1060.6,598.7" fill="#ffa77f"/>
<polygon points="1051.1,602.4 1051.1,595.3 1054.2,594.1 1060.6,598.7 1051.1,602.4" fill="#c0785c"/>
<polygon points="1070,575.7 1060.6,579.4 1060.6,579.4 1060.6,579.4 1070,575.7" fill="#7d4f3c"/>
<polygon points="1063.6,608.2 1063.6,605.7 1070,603.2 1070,603.2 1070,612.8" fill="#7d4f3c"/>
<polygon points="1054.2,621.5 1063.6,608.2 1070,612.8 1060.6,626.2" fill="#ffa77f"/>
<polygon points="1051.1,629.9 1051.1,622.7 1054.2,621.5 1060.6,626.2 1051.1,629.9" fill="#c0785c"/>
<polygon points="1070,603.2 1060.6,606.9 1060.6,606.9 1060.6,606.9 1070,603.2" fill="#7d4f3c"/>
<polygon points="1063.6,635.7 1063.6,633.2 1070,630.7 1070,630.7 1070,640.3" fill="#7d4f3c"/>
<polygon points="1054.2,649 1063.6,635.7 1070,640.3 1060.6,653.7" fill="#ffa77f"/>
<polygon points="1051.1,657.4 1051.1,650.2 1054.2,649 1060.6,653.7 1051.1,657.4" fill="#c0785c"/>
<polygon points="1070,630.7 1060.6,634.4 1060.6,634.4 1060.6,634.4 1070,630.7" fill="#7d4f3c"/>
<polygon points="1063.6,663.2 1063.6,660.7 1070,658.2 1070,658.2 1070,667.8" fill="#7d4f3c"/>
<polygon points="1054.2,676.5 1063.6,663.2 1070,667.8 1060.6,681.2" fill="#ffa77f"/>
<polygon points="1051.1,684.9 1051.1,677.7 1054.2,676.5 1060.6,681.2 1051.1,684.9" fill="#c0785c"/>
<polygon points="1070,658.2 1060.6,661.9 1060.6,661.9 1060.6,661.9 1070,658.2" fill="#7d4f3c"/>
<polygon points="1063.6,690.7 1063.6,688.2 1070,685.7 1070,685.7 1070,695.3" fill="#7d4f3c"/>
<polygon points="1054.2,704 1063.6,690.7 1070,695.3 1060.6,708.7" fill="#ffa77f"/>
<polygon points="1051.1,712.4 1051.1,705.2 1054.2,704 1060.6,708.7 1051.1,712.4" fill="#c0785c"/>
<polygon points="1070,685.7 1060.6,689.4 1060.6,689.4 1060.6,689.4 1070,685.7" fill="#7d4f3c"/>
<polygon points="1086.2,713 1081.1,709.3 1081.1,525.3 1086.2,529" fill="#007d66"/>
<polygon points="1095.4,704.7 1086.2,713 1086.2,529 1095.4,520.7" fill="#00b695"/>
<polygon points="1095.4,520.7 1090.3,517 1081.1,525.3 1086.2,529" fill="#00ffd1"/>
<polygon points="976.3,812 971.2,808.2 971.2,800.1 976.3,803.8" fill="#007d66"/>
<polygon points="1086.2,713 976.3,812 976.3,803.8 1086.2,704.9" fill="#00b695"/>
<polygon points="1086.2,704.9 1081.1,701.2 971.2,800.1 976.3,803.8" fill="#00ffd1"/>
<polygon points="911.9,870 906.7,866.3 906.7,858.2 911.9,861.9" fill="#007d66"/>
<polygon points="964.8,822.3 911.9,870 911.9,861.9 964.8,814.2" fill="#00b695"/>
<polygon points="964.8,814.2 959.7,810.5 906.7,858.2 911.9,861.9" fill="#00ffd1"/>
<polygon points="902.7,878.3 897.5,874.6 897.5,690.5 902.7,694.3" fill="#007d66"/>
<polygon points="911.9,870 902.7,878.3 902.7,694.3 911.9,686" fill="#00b695"/>
<polygon points="911.9,686 906.7,682.3 897.5,690.5 902.7,694.3" fill="#00ffd1"/>
<polygon points="958.1,756.4 963.2,751.9 963.2,796 958.1,792" fill="#9ecc52"/>
<polygon points="958.1,790.2 963.2,786.8 963.2,795.4 958.1,791.8" fill="#80ffd5"/>
<polygon points="958.1,804.6 975.6,816.8 976.4,817.2 971,823 964.8,827.8 964.8,814.2 959.7,810.5 958.1,809.4" fill="#ffffe5"/>
<polygon points="919.8,790.6 926.3,782.8 929,782.3 929,784.2 922.6,792.9" fill="#ffffe5"/>
<polygon points="958.1,791.8 963.2,795.4 963.2,802.5 970,807.2 970,800.2 971,800.4 976.3,804 976.3,817.1 958.1,804.7" fill="#4d6428"/>
<polygon points="963.2,751.9 970,745.8 970,807.2 963.2,802.5" fill="#6b6536"/>
<g stroke="#4d6428" stroke-width="1">
<line x1="963.2" y1="753.5" x2="970" y2="756.5"/>
<line x1="963.2" y1="757.7" x2="970" y2="760.7"/>
<line x1="963.2" y1="761.9" x2="970" y2="764.9"/>
<line x1="963.2" y1="766.1" x2="970" y2="769.1"/>
<line x1="963.2" y1="770.3" x2="970" y2="773.3"/>
<line x1="963.2" y1="774.5" x2="970" y2="777.5"/>
<line x1="963.2" y1="778.7" x2="970" y2="781.7"/>
<line x1="963.2" y1="782.9" x2="970" y2="785.9"/>
<line x1="963.2" y1="787.1" x2="970" y2="790.1"/>
<line x1="963.2" y1="791.3" x2="970" y2="794.3"/>
<line x1="963.2" y1="795.5" x2="970" y2="798.5"/>
<line x1="963.2" y1="799.7" x2="970" y2="802.7"/>
<line x1="963.2" y1="803.9" x2="970" y2="806.9"/>
</g>
<polygon points="1100.9,704.9 976.3,817 976.3,811.3 1100.9,699.1" fill="#b29a1f"/>
<polygon points="964.8,827.4 839.1,940.6 839.1,934.9 964.8,821.7" fill="#b29a1f"/>
<polygon points="895.7,700.5 902.7,694.3 358.2,299.5 358.2,299.5 351.1,294.9 343.4,290.9 335.3,287.6 326.8,285 318,283.1 309,281.9 299.9,281.6 290.8,282 281.8,283.1 273,285 264.5,287.7 256.4,291 248.8,295.1 241.7,299.7 235.3,304.9 243,310.5 248.7,305.9 254.9,301.8 261.6,298.3 268.8,295.3 276.2,293 284,291.3 291.9,290.3 299.9,289.9 307.9,290.2 315.9,291.3 323.6,292.9 331.1,295.2 338.3,298.2 345,301.7 351.3,305.8" fill="#6596ef"/>
<polygon points="895.7,884.5 351.3,489.8 351.3,305.8 895.7,700.5" fill="#314974"/>
<polygon points="351.3,489.8 345,485.7 345,301.7 351.3,305.8" fill="#2e456e"/>
<polygon points="345,485.7 338.3,482.2 338.3,298.2 345,301.7" fill="#293d61"/>
<polygon points="338.3,482.2 331.1,479.3 331.1,295.2 338.3,298.2" fill="#233453"/>
<polygon points="331.1,479.3 323.6,476.9 323.6,292.9 331.1,295.2" fill="#1d2b44"/>
<polygon points="323.6,476.9 315.9,475.3 315.9,291.3 323.6,292.9" fill="#172236"/>
<polygon points="315.9,475.3 307.9,474.3 307.9,290.2 315.9,291.3" fill="#182338"/>
<polygon points="307.9,474.3 299.9,473.9 299.9,289.9 307.9,290.2" fill="#1e2c46"/>
<polygon points="299.9,473.9 291.9,474.3 291.9,290.3 299.9,289.9" fill="#243555"/>
<polygon points="291.9,474.3 284,475.3 284,291.3 291.9,290.3" fill="#2a3e63"/>
<polygon points="284,475.3 276.2,477 276.2,293 284,291.3" fill="#2f4670"/>
<polygon points="276.2,477 268.8,479.3 268.8,295.3 276.2,293" fill="#354e7d"/>
<polygon points="268.8,479.3 261.6,482.3 261.6,298.3 268.8,295.3" fill="#3a5688"/>
<polygon points="261.6,482.3 254.9,485.8 254.9,301.8 261.6,298.3" fill="#3e5d93"/>
<polygon points="254.9,485.8 248.7,489.9 248.7,305.9 254.9,301.8" fill="#42639d"/>
<polygon points="248.7,489.9 243,494.5 243,310.5 248.7,305.9" fill="#4668a5"/>
<polygon points="902.7,878.3 895.7,884.5 895.7,700.5 902.7,694.3" fill="#476aa9"/>
<polygon points="837.6,938.1 332.3,571.8 333.4,573.3 838.8,939.6" fill="#8c7919"/>
<polygon points="837.6,938.1 332.3,571.8 332.3,390.3 837.6,756.6" fill="#7a6a16"/>
<polygon points="844.5,746.6 339.2,380.2 336.6,382.6 841.9,748.9" fill="#fbd82c"/>
<polygon points="841.9,748.9 336.6,382.6 336,383.1 841.4,749.5" fill="#ffdc2d"/>
<polygon points="841.4,749.5 336,383.1 335.5,383.7 840.8,750.1" fill="#ffe12e"/>
<polygon points="840.8,750.1 335.5,383.7 334.9,384.3 840.3,750.7" fill="#ffe32f"/>
<polygon points="840.3,750.7 334.9,384.3 334.4,385 839.8,751.4" fill="#ffe22e"/>
<polygon points="839.8,751.4 334.4,385 334,385.7 839.3,752.1" fill="#ffde2d"/>
<polygon points="839.3,752.1 334,385.7 333.5,386.4 838.9,752.8" fill="#f9d72c"/>
<polygon points="838.9,752.8 333.5,386.4 333.2,387.1 838.5,753.5" fill="#edcc2a"/>
<polygon points="838.5,753.5 333.2,387.1 332.9,387.8 838.2,754.2" fill="#debf27"/>
<polygon points="838.2,754.2 332.9,387.8 332.6,388.5 838,754.9" fill="#ccb024"/>
<polygon points="838,754.9 332.6,388.5 332.4,389.1 837.8,755.5" fill="#b79e20"/>
<polygon points="837.8,755.5 332.4,389.1 332.3,389.7 837.7,756.1" fill="#a08a1c"/>
<polygon points="837.7,756.1 332.3,389.7 332.3,390.3 837.6,756.6" fill="#877518"/>
<polygon points="236.1,502 164.3,449.9 165.4,451.4 237.2,503.5" fill="#8c7919"/>
<polygon points="236.1,502 164.3,449.9 164.3,268.5 236.1,320.5" fill="#7a6a16"/>
<polygon points="243,310.5 171.2,258.4 168.6,260.8 240.4,312.8" fill="#fbd82c"/>
<polygon points="240.4,312.8 168.6,260.8 168,261.3 239.8,313.4" fill="#ffdc2d"/>
<polygon points="239.8,313.4 168,261.3 167.5,261.9 239.3,314" fill="#ffe12e"/>
<polygon points="239.3,314 167.5,261.9 166.9,262.5 238.8,314.6" fill="#ffe32f"/>
<polygon points="238.8,314.6 166.9,262.5 166.4,263.2 238.2,315.3" fill="#ffe22e"/>
<polygon points="238.2,315.3 166.4,263.2 165.9,263.9 237.8,316" fill="#ffde2d"/>
<polygon points="237.8,316 165.9,263.9 165.5,264.6 237.4,316.7" fill="#f9d72c"/>
<polygon points="237.4,316.7 165.5,264.6 165.2,265.3 237,317.4" fill="#edcc2a"/>
<polygon points="237,317.4 165.2,265.3 164.8,266 236.7,318.1" fill="#debf27"/>
<polygon points="236.7,318.1 164.8,266 164.6,266.7 236.4,318.8" fill="#ccb024"/>
<polygon points="236.4,318.8 164.6,266.7 164.4,267.3 236.2,319.4" fill="#b79e20"/>
<polygon points="236.2,319.4 164.4,267.3 164.3,267.9 236.1,320" fill="#a08a1c"/>
<polygon points="236.1,320 164.3,267.9 164.3,268.5 236.1,320.5" fill="#877518"/>
<polygon points="844.5,935.7 844.5,746.6 841.9,748.9 840.6,750.3 839.4,751.9 838.5,753.6 837.8,755.3 837.6,756.6 837.6,938.1 837.8,939.1 838.5,939.6 839.4,939.6 840.6,939.1 841.9,938" fill="#b29a1f"/>
<polygon points="243,494.5 236.1,500.7 236.1,316.7 243,310.5" fill="#70913a"/>
<g stroke-width="1" fill="none"><line x1="127.5" y1="883.5" x2="87.2" y2="854.2" stroke="#f00"/><line x1="127.5" y1="883.5" x2="92.2" y2="915.6" stroke="#0f0"/><line x1="127.5" y1="883.5" x2="127.5" y2="852" stroke="#00f"/><g stroke="#000"><path d="M76 845.2 L82 850.8 M76 850.8 L82 845.2"/><path d="M125.2 841.5 H131 L125.2 847.5 H131.2"/><path d="M81 920 L84 922.6 M87 920 L81 925.8"/></g></g>
</svg>
<svg class="b" style="left:0;top:1026px" width="600" height="36" viewBox="0 1026 600 36" fill="none" stroke="#111" stroke-width="1.5" stroke-linejoin="round" stroke-linecap="round">
<g stroke="#90c8f6" stroke-width="1" fill="#c0dcf3" shape-rendering="crispEdges"><rect x="454.5" y="1029.5" width="30" height="28"/><rect x="491.5" y="1029.5" width="30" height="28"/><rect x="522.5" y="1029.5" width="30" height="28"/></g>
<g stroke="#cfcfcf" stroke-width="1" shape-rendering="crispEdges"><path d="M97.5 1031 V1057 M227.5 1031 V1057 M419.5 1031 V1057 M487.5 1031 V1057"/></g>
<path d="M16.7 1032.6 L25.4 1038.2 V1046.8 L16.7 1052 L8 1046.8 V1038.2 Z M8 1038.2 L16.7 1042.2 L25.4 1038.2 M16.7 1042.2 V1047" stroke="#333" stroke-width="1.15" stroke-dasharray="1.3 1.7"/>
<path d="M11.4 1046.2 L17 1051 L11.4 1055.6 M17.2 1046.2 L22.8 1051 L17.2 1055.6" stroke="#000" stroke-width="2.5" stroke-linecap="butt" stroke-linejoin="miter"/>
<path d="M47.7 1032.4 L56.4 1037.7 V1048.4 L47.7 1053 L39.4 1048.4 V1037.7 Z M39.4 1037.7 L47.7 1042.2 L56.4 1037.7 M47.7 1042.2 V1046.6"/>
<path d="M44.8 1047.2 H50.8 M44.8 1054.9 H50.8" stroke-width="1.5" stroke-linecap="butt"/><path d="M45.4 1048 H50.2 L47.8 1051 Z M47.8 1051 L50.2 1054 H45.4 Z" fill="#111" stroke-width="0.6"/>
<path d="M73.5 1043.6 V1038.4 L78 1033.4 H83.4 Q84.6 1033.4 84.6 1034.6 V1043.6"/><path d="M74 1038.2 L77.8 1034 V1038.2 Z" fill="#111" stroke-width="0.8"/>
<text x="79.6" y="1053.3" text-anchor="middle" font-family="Liberation Sans, sans-serif" font-weight="bold" font-size="10.5" fill="#000" stroke="#000" stroke-width="0.7" textLength="19.6" lengthAdjust="spacingAndGlyphs">STL</text>
<circle cx="114.3" cy="1041.2" r="5" stroke-width="2.2"/><path d="M117.8 1046.4 L121.6 1050.4" stroke-width="3" stroke-linecap="butt"/>
<path d="M107.8 1038 V1034.8 H111 M118.6 1034.8 H121.4 V1038 M107.8 1044.8 V1048 H111 M121.4 1045 V1046.4" stroke-width="1.6" stroke-linecap="butt" stroke-linejoin="miter"/>
<circle cx="145.2" cy="1041.4" r="4.8" stroke-width="2.1"/><path d="M148.8 1046 L153 1050.4" stroke-width="3" stroke-linecap="butt"/><path d="M142.7 1041.4 H147.7 M145.2 1038.9 V1043.9" stroke-width="1"/>
<circle cx="176.4" cy="1041.4" r="4.8" stroke-width="2.1"/><path d="M180 1046 L184.2 1050.4" stroke-width="3" stroke-linecap="butt"/><path d="M173.9 1041.4 H178.9" stroke-width="1"/>
<path d="M203.6 1038.4 A7.8 7.8 0 1 1 201.3 1045.4" stroke-width="2.2" stroke-linecap="butt"/><path d="M200.6 1035.2 L201.2 1042 L207.4 1040.2 Z" fill="#111" stroke-width="0.6"/>
<path d="M237 1042.3 L240 1035.5 L248.8 1035.5 L251.2 1042.3 L248.4 1049.2 L240 1049.2 Z M237 1042.3 H245.8 L248.8 1035.5 M245.8 1042.3 L248.4 1049.2" stroke="#2a2a2a" stroke-width="1.25"/>
<path d="M250.6 1040.6 L254.4 1042.8 L250.6 1045 Z" fill="#111" stroke-width="0.8"/>
<path d="M277 1038.4 L284 1041 V1047.8 L277 1050.8 L270.1 1047.8 V1041 Z M270.1 1041 L277 1043.4 L284 1041 M277 1043.4 V1050.8" stroke="#2a2a2a" stroke-width="1.25"/>
<path d="M275 1037.8 L277 1033.6 L279 1037.8 Z" fill="#111" stroke-width="0.8"/>
<path d="M306.3 1034.4 L313.6 1037.4 V1045.4 L306.3 1047.8 L299.4 1045.4 V1037.4 Z M299.4 1045.4 L306.3 1043 L313.6 1045.4 M306.3 1043 V1034.4" stroke="#2a2a2a" stroke-width="1.25"/>
<path d="M304.3 1048.2 L306.3 1052 L308.3 1048.2 Z" fill="#111" stroke-width="0.8"/>
<path d="M347.8 1042.3 L344.9 1035.5 L336.4 1035.5 L334 1042.3 L336.6 1049.2 L344.9 1049.2 Z M347.8 1042.3 H339 L336.4 1035.5 M339 1042.3 L336.6 1049.2" stroke="#2a2a2a" stroke-width="1.25"/>
<path d="M334.6 1040.6 L330.8 1042.8 L334.6 1045 Z" fill="#111" stroke-width="0.8"/>
<path d="M363.2 1040.4 L370.1 1043 V1050.8 L363.2 1048.3 Z" fill="#222" stroke="none"/>
<path d="M370.1 1037 L377 1040.4 V1048.3 L370.1 1050.8 L363.2 1048.3 V1040.4 Z M363.2 1040.4 L370.1 1043 L377 1040.4 M370.1 1043 V1050.8" stroke="#2a2a2a" stroke-width="1.25"/>
<path d="M401.3 1037 L408.2 1040.4 V1046.4 L401.3 1043.4 Z" fill="#222" stroke="none"/>
<path d="M401.3 1037 L408.2 1040.4 V1048.3 L401.3 1050.8 L394.4 1048.3 V1040.4 Z M394.4 1040.4 L401.3 1043.4 M401.3 1037 V1050.8 M401.3 1046 L408.2 1048.3" stroke="#2a2a2a" stroke-width="1.25"/>
<path d="M430.4 1043.4 H439.8 V1051.6 H430.4 Z M430.4 1043.2 L447.4 1035.4 L440.6 1051.4 M439.8 1043.4 L447.4 1035.4" stroke-width="1.5" stroke-linejoin="miter"/>
<path d="M463 1043.8 H471.4 V1052 H463 Z M468.4 1038.8 H476.8 V1047 H468.4 Z M463 1043.8 L468.4 1038.8 M471.4 1043.8 L476.8 1038.8 M471.4 1052 L476.8 1047 M463 1052 L468.4 1047" stroke="#2a2a2a" stroke-width="1.25"/>
<path d="M507 1035 V1044.8 H517.8 M507 1044.8 L499.2 1051.8" stroke-width="1" stroke="#222"/><circle cx="507" cy="1044.8" r="1.4" fill="#111" stroke="none"/>
<path d="M537.5 1034.4 V1044.4 H548.4 M537.5 1044.4 L530 1051.6 M537.5 1036.4 H539.6 M537.5 1038.8 H539.6 M537.5 1041.2 H539.6 M540.4 1044.4 V1042.6 M543 1044.4 V1042.6 M545.6 1044.4 V1042.6 M531.4 1049.4 L532.8 1050.8 M533.4 1047.6 L534.8 1049 M535.4 1045.8 L536.8 1047.2" stroke="#222" stroke-width="0.9"/>
<text x="544" y="1053.2" text-anchor="middle" font-family="Liberation Sans, sans-serif" font-size="8.5" fill="#333" stroke="none">10</text>
<path d="M563.6 1038.9 H572.4 M563.6 1049.3 H572.4 M561.8 1040.8 V1047.4 M574.2 1040.8 V1047.4" stroke="#666" stroke-width="1.2" stroke-linecap="butt"/>
<g fill="#111" stroke="none"><circle cx="561.8" cy="1038.9" r="1.5"/><circle cx="574.2" cy="1038.9" r="1.5"/><circle cx="561.8" cy="1049.3" r="1.5"/><circle cx="574.2" cy="1049.3" r="1.5"/></g>
</svg>
<div class="b" style="left:0px;top:0px;width:1920px;height:44px;background:#fff;"></div>
<div class="b" style="left:0px;top:43px;width:1920px;height:1px;background:#f0f0f0;"></div>
<div class="b" style="left:840px;top:0px;width:241px;height:1px;background:#e3e3e3;"></div>
<div class="b" style="left:936px;top:0px;width:48px;height:1px;background:#0078d7;"></div>
<svg class="b" style="left:0;top:0" width="22" height="22" viewBox="0 0 22 22"><ellipse cx="4.6" cy="13.8" rx="2.6" ry="3.2" fill="#c9a07c" transform="rotate(-20 4.6 13.8)"/><ellipse cx="15.9" cy="8.2" rx="2.3" ry="2.6" fill="#c9a07c" transform="rotate(-25 15.9 8.2)"/><circle cx="9.9" cy="10.9" r="6.1" fill="#cdb526"/><ellipse cx="8.2" cy="9.4" rx="4.4" ry="3.4" fill="#fbe736" transform="rotate(-20 8.2 9.4)"/><ellipse cx="9.8" cy="6.3" rx="3" ry="1.4" fill="#3f4f12" transform="rotate(-8 9.8 6.3)"/><ellipse cx="13.9" cy="13.3" rx="1.9" ry="3" fill="#b7e05e" transform="rotate(35 13.9 13.3)"/><ellipse cx="9.6" cy="15.8" rx="3.2" ry="1.4" fill="#6e5c10"/><ellipse cx="6.2" cy="12.6" rx="1.6" ry="2" fill="#8b7a3a" transform="rotate(-30 6.2 12.6)"/><ellipse cx="14.6" cy="9" rx="1.3" ry="2" fill="#7d6a22" transform="rotate(-30 14.6 9)"/></svg>
<div class="t" style="left:23.00px;top:6px;font-size:12px;color:#999;letter-spacing:-0.227px;">BasketWithDividers-v06.scad - OpenSCAD</div>
<div class="t" style="left:8.00px;top:28px;font-size:12px;color:#999;letter-spacing:-0.286px;">File</div>
<div class="t" style="left:42.00px;top:28px;font-size:12px;color:#999;letter-spacing:-0.122px;">Edit</div>
<div class="t" style="left:78.00px;top:28px;font-size:12px;color:#999;letter-spacing:-0.260px;">Design</div>
<div class="t" style="left:129.60px;top:28px;font-size:12px;color:#999;letter-spacing:-0.049px;">View</div>
<div class="t" style="left:170.90px;top:28px;font-size:12px;color:#999;letter-spacing:0.269px;">Window</div>
<div class="t" style="left:231.00px;top:28px;font-size:12px;color:#999;letter-spacing:-0.047px;">Help</div>
<svg class="b" style="left:1790px;top:0" width="120" height="22" viewBox="0 0 120 22" shape-rendering="crispEdges" fill="none" stroke="#999" stroke-width="1"><path d="M9 10.5 H19"/><path d="M54.5 7.5 H61.5 V14.5 H54.5Z M56.5 7.5 V5.5 H63.5 V12.5 H61.5"/><path d="M100 5 L110 15 M110 5 L100 15" shape-rendering="auto"/></svg>
<div class="b" style="left:1280px;top:45px;width:640px;height:19px;background:#dadada;box-sizing:border-box;border:1px solid #b4b4b4;"></div>
<div class="t" style="left:1285.00px;top:50px;font-size:12px;letter-spacing:-0.049px;">Customizer</div>
<svg class="b" style="left:1903px;top:50px" width="10" height="10" viewBox="0 0 10 10"><path d="M1.5 1.5 L8.5 8.5 M8.5 1.5 L1.5 8.5" stroke="#333" stroke-width="2.2" fill="none"/></svg>
<div class="b" style="left:1280px;top:75px;width:13px;height:13px;background:#fff;box-sizing:border-box;border:1px solid #333;"></div>
<svg class="b" style="left:1280px;top:75px" width="13" height="13" viewBox="0 0 13 13"><path d="M2.8 6.6 L5.3 9.3 L10.3 3.5" stroke="#3a3a3a" stroke-width="1.5" fill="none"/></svg>
<div class="t" style="left:1297.30px;top:77px;letter-spacing:-0.111px;">Automatic Preview</div>
<div class="b" style="left:1493px;top:71px;width:210px;height:20px;background:#e1e1e1;box-sizing:border-box;border:1px solid #adadad;"></div>
<div class="t" style="left:1495.90px;top:77px;letter-spacing:-0.217px;">Show Details</div>
<svg class="b" style="left:1689px;top:78px" width="10" height="6" viewBox="0 0 10 6"><path d="M1 1 L5 5 L9 1" stroke="#444" stroke-width="1.1" fill="none"/></svg>
<div class="b" style="left:1708px;top:71px;width:207px;height:21px;background:#e1e1e1;box-sizing:border-box;border:1px solid #adadad;"></div>
<div class="t" style="left:1795.90px;top:77px;letter-spacing:0.110px;">Reset</div>
<div class="b" style="left:1280px;top:97px;width:450px;height:26px;background:#fff;box-sizing:border-box;border:1px solid #7a7a7a;"></div>
<div class="t" style="left:1284.30px;top:106px;letter-spacing:-0.050px;">design default values</div>
<svg class="b" style="left:1716px;top:107px" width="10" height="6" viewBox="0 0 10 6"><path d="M1 1 L5 5 L9 1" stroke="#444" stroke-width="1.1" fill="none"/></svg>
<div class="b" style="left:1744px;top:98px;width:38px;height:24px;background:#e1e1e1;box-sizing:border-box;border:1px solid #adadad;"></div>
<div class="t" style="left:1759.40px;top:105px;font-size:12px;">+</div>
<div class="b" style="left:1788px;top:98px;width:38px;height:24px;background:#e1e1e1;box-sizing:border-box;border:1px solid #adadad;"></div>
<div class="t" style="left:1805.20px;top:105px;font-size:12px;">-</div>
<div class="b" style="left:1832px;top:98px;width:83px;height:24px;background:#e1e1e1;box-sizing:border-box;border:1px solid #adadad;"></div>
<div class="t" style="left:1834.80px;top:103px;font-size:15px;letter-spacing:0.014px;">save preset</div>
<div class="b" style="left:1280px;top:127px;width:636px;height:932px;background:#f0f0f0;box-sizing:border-box;border:1px solid #828790;"></div>
<div class="b" style="left:1899px;top:128px;width:16px;height:930px;background:#f0f0f0;"></div>
<div class="b" style="left:1899px;top:145px;width:15px;height:826px;background:#cdcdcd;"></div>
<svg class="b" style="left:1901px;top:133px" width="12" height="8" viewBox="0 0 12 8"><path d="M2.4 6.2 L5.6 2.6 L8.8 6.2" stroke="#606060" stroke-width="1.7" fill="none"/></svg>
<svg class="b" style="left:1901px;top:1047px" width="12" height="8" viewBox="0 0 12 8"><path d="M2.4 1.6 L5.6 5.2 L8.8 1.6" stroke="#606060" stroke-width="1.7" fill="none"/></svg>
<div class="b" style="left:1281px;top:128px;width:617px;height:21px;background:#c0dcf3;box-sizing:border-box;border:1px solid #99ccf5;"></div>
<svg class="b" style="left:1285px;top:135px" width="16" height="10" viewBox="0 0 16 10"><path d="M0.8 1.2 L14.2 1.2 L7.5 8.6Z" fill="#000"/></svg>
<div class="t" style="left:1302.10px;top:136px;letter-spacing:-0.273px;">Basic Parameters - Primary Design Choices</div>
<div class="t bd" style="left:1284.40px;top:152px;letter-spacing:0.136px;">Number Compartments</div>
<div class="t" style="left:1284.40px;top:165px;letter-spacing:-0.018px;">Enter the number of compartments that you would like in the filter basket.</div>
<div class="b" style="left:1859px;top:154px;width:35px;height:18px;background:#fff;box-sizing:border-box;border:1px solid #7a7a7a;"></div>
<div class="b" style="left:1878px;top:156px;width:14px;height:14px;background:#f0f0f0;box-sizing:border-box;border:1px solid #c8c8c8;"></div>
<div class="b" style="left:1878px;top:162px;width:14px;height:1px;background:#c8c8c8;"></div>
<svg class="b" style="left:1878px;top:156px" width="14" height="14" viewBox="0 0 14 14"><path d="M4 5.5 L7 2.3 L10 5.5Z M4 8.7 L7 11.9 L10 8.7Z" fill="#000"/></svg>
<div class="t" style="left:1866.88px;top:159px;">3</div>
<div class="b" style="left:1285px;top:184px;width:609px;height:4px;background:#e7eaea;box-sizing:border-box;border:1px solid #d6d6d6;"></div>
<div class="b" style="left:1348px;top:176px;width:10px;height:21px;background:#0078d7;"></div>
<div class="b" style="left:1281px;top:198px;width:617px;height:21px;background:#c0dcf3;box-sizing:border-box;border:1px solid #99ccf5;"></div>
<svg class="b" style="left:1285px;top:205px" width="16" height="10" viewBox="0 0 16 10"><path d="M0.8 1.2 L14.2 1.2 L7.5 8.6Z" fill="#000"/></svg>
<div class="t" style="left:1302.10px;top:206px;letter-spacing:-0.253px;">Basic Parameters - Secondary Design Choices</div>
<div class="t bd" style="left:1284.40px;top:222px;letter-spacing:0.122px;">Basket Length</div>
<div class="t" style="left:1284.40px;top:235px;letter-spacing:-0.046px;">Enter the length of the basket (mm). This is the top to bottom size when installed in the aquarium.</div>
<div class="b" style="left:1853px;top:224px;width:41px;height:18px;background:#fff;box-sizing:border-box;border:1px solid #7a7a7a;"></div>
<div class="b" style="left:1878px;top:226px;width:14px;height:14px;background:#f0f0f0;box-sizing:border-box;border:1px solid #c8c8c8;"></div>
<div class="b" style="left:1878px;top:232px;width:14px;height:1px;background:#c8c8c8;"></div>
<svg class="b" style="left:1878px;top:226px" width="14" height="14" viewBox="0 0 14 14"><path d="M4 5.5 L7 2.3 L10 5.5Z M4 8.7 L7 11.9 L10 8.7Z" fill="#000"/></svg>
<div class="t" style="left:1854.64px;top:229px;">210</div>
<div class="b" style="left:1285px;top:254px;width:609px;height:4px;background:#e7eaea;box-sizing:border-box;border:1px solid #d6d6d6;"></div>
<div class="b" style="left:1668px;top:246px;width:10px;height:21px;background:#0078d7;"></div>
<div class="t bd" style="left:1284.40px;top:270px;letter-spacing:-0.048px;">Outflow Exit Size</div>
<div class="t" style="left:1284.40px;top:283px;letter-spacing:0.031px;">Enter the height of the outflow exit (mm).  This is the top to bottom distance of the outflow exit into chamber 2.</div>
<div class="b" style="left:1859px;top:272px;width:35px;height:18px;background:#fff;box-sizing:border-box;border:1px solid #7a7a7a;"></div>
<div class="b" style="left:1878px;top:274px;width:14px;height:14px;background:#f0f0f0;box-sizing:border-box;border:1px solid #c8c8c8;"></div>
<div class="b" style="left:1878px;top:280px;width:14px;height:1px;background:#c8c8c8;"></div>
<svg class="b" style="left:1878px;top:274px" width="14" height="14" viewBox="0 0 14 14"><path d="M4 5.5 L7 2.3 L10 5.5Z M4 8.7 L7 11.9 L10 8.7Z" fill="#000"/></svg>
<div class="t" style="left:1860.75px;top:277px;">30</div>
<div class="b" style="left:1285px;top:302px;width:609px;height:4px;background:#e7eaea;box-sizing:border-box;border:1px solid #d6d6d6;"></div>
<div class="b" style="left:1584px;top:294px;width:10px;height:21px;background:#0078d7;"></div>
<div class="t bd" style="left:1284.40px;top:318px;letter-spacing:-0.019px;">Divider Width</div>
<div class="t" style="left:1284.40px;top:331px;letter-spacing:-0.040px;">Enter the width of the dividers (mm). This is the front to back size of the dividers when installed in the aquarium.</div>
<div class="b" style="left:1849px;top:320px;width:45px;height:18px;background:#fff;box-sizing:border-box;border:1px solid #7a7a7a;"></div>
<div class="b" style="left:1878px;top:322px;width:14px;height:14px;background:#f0f0f0;box-sizing:border-box;border:1px solid #c8c8c8;"></div>
<div class="b" style="left:1878px;top:328px;width:14px;height:1px;background:#c8c8c8;"></div>
<svg class="b" style="left:1878px;top:322px" width="14" height="14" viewBox="0 0 14 14"><path d="M4 5.5 L7 2.3 L10 5.5Z M4 8.7 L7 11.9 L10 8.7Z" fill="#000"/></svg>
<div class="t" style="left:1851.58px;top:325px;">66.5</div>
<div class="b" style="left:1285px;top:350px;width:609px;height:4px;background:#e7eaea;box-sizing:border-box;border:1px solid #d6d6d6;"></div>
<div class="b" style="left:1671px;top:342px;width:10px;height:21px;background:#0078d7;"></div>
<div class="t bd" style="left:1284.40px;top:366px;letter-spacing:0.036px;">Floor Thickness</div>
<div class="t" style="left:1284.40px;top:379px;letter-spacing:-0.059px;">Enter the thickness of the back wall (mm). This is the floor of the model when it is laying down in easy-print (no</div>
<div class="t" style="left:1284.40px;top:392px;letter-spacing:-0.057px;">supports) orientation as it is modelled here.</div>
<div class="b" style="left:1855px;top:374px;width:39px;height:18px;background:#fff;box-sizing:border-box;border:1px solid #7a7a7a;"></div>
<div class="b" style="left:1878px;top:376px;width:14px;height:14px;background:#f0f0f0;box-sizing:border-box;border:1px solid #c8c8c8;"></div>
<div class="b" style="left:1878px;top:382px;width:14px;height:1px;background:#c8c8c8;"></div>
<svg class="b" style="left:1878px;top:376px" width="14" height="14" viewBox="0 0 14 14"><path d="M4 5.5 L7 2.3 L10 5.5Z M4 8.7 L7 11.9 L10 8.7Z" fill="#000"/></svg>
<div class="t" style="left:1857.70px;top:379px;">2.0</div>
<div class="b" style="left:1285px;top:411px;width:609px;height:4px;background:#e7eaea;box-sizing:border-box;border:1px solid #d6d6d6;"></div>
<div class="b" style="left:1493px;top:403px;width:10px;height:21px;background:#0078d7;"></div>
<div class="t bd" style="left:1284.40px;top:427px;letter-spacing:0.085px;">Wall Thickness</div>
<div class="t" style="left:1284.40px;top:440px;letter-spacing:-0.068px;">Enter the thickness of the side walls (mm). These are the vertical walls when it is laying down in easy-print (no</div>
<div class="t" style="left:1284.40px;top:453px;letter-spacing:-0.057px;">supports) orientation as it is modelled here.</div>
<div class="b" style="left:1855px;top:435px;width:39px;height:18px;background:#fff;box-sizing:border-box;border:1px solid #7a7a7a;"></div>
<div class="b" style="left:1878px;top:437px;width:14px;height:14px;background:#f0f0f0;box-sizing:border-box;border:1px solid #c8c8c8;"></div>
<div class="b" style="left:1878px;top:443px;width:14px;height:1px;background:#c8c8c8;"></div>
<svg class="b" style="left:1878px;top:437px" width="14" height="14" viewBox="0 0 14 14"><path d="M4 5.5 L7 2.3 L10 5.5Z M4 8.7 L7 11.9 L10 8.7Z" fill="#000"/></svg>
<div class="t" style="left:1857.70px;top:440px;">2.4</div>
<div class="b" style="left:1285px;top:472px;width:609px;height:4px;background:#e7eaea;box-sizing:border-box;border:1px solid #d6d6d6;"></div>
<div class="b" style="left:1545px;top:464px;width:10px;height:21px;background:#0078d7;"></div>
<div class="t bd" style="left:1284.40px;top:488px;letter-spacing:0.062px;">Divider Thickness</div>
<div class="t" style="left:1284.40px;top:501px;letter-spacing:-0.058px;">Enter the thickness of the dividers (mm).</div>
<div class="b" style="left:1855px;top:490px;width:39px;height:18px;background:#fff;box-sizing:border-box;border:1px solid #7a7a7a;"></div>
<div class="b" style="left:1878px;top:492px;width:14px;height:14px;background:#f0f0f0;box-sizing:border-box;border:1px solid #c8c8c8;"></div>
<div class="b" style="left:1878px;top:498px;width:14px;height:1px;background:#c8c8c8;"></div>
<svg class="b" style="left:1878px;top:492px" width="14" height="14" viewBox="0 0 14 14"><path d="M4 5.5 L7 2.3 L10 5.5Z M4 8.7 L7 11.9 L10 8.7Z" fill="#000"/></svg>
<div class="t" style="left:1857.70px;top:495px;">2.0</div>
<div class="b" style="left:1285px;top:520px;width:609px;height:4px;background:#e7eaea;box-sizing:border-box;border:1px solid #d6d6d6;"></div>
<div class="b" style="left:1493px;top:512px;width:10px;height:21px;background:#0078d7;"></div>
<div class="t bd" style="left:1284.40px;top:536px;letter-spacing:0.059px;">Divider Clearance</div>
<div class="t" style="left:1284.40px;top:549px;letter-spacing:-0.058px;">Enter the clearance of the dividers (mm). This is the additional space between the divider and the divider slot walls.</div>
<div class="b" style="left:1855px;top:538px;width:39px;height:18px;background:#fff;box-sizing:border-box;border:1px solid #7a7a7a;"></div>
<div class="b" style="left:1878px;top:540px;width:14px;height:14px;background:#f0f0f0;box-sizing:border-box;border:1px solid #c8c8c8;"></div>
<div class="b" style="left:1878px;top:546px;width:14px;height:1px;background:#c8c8c8;"></div>
<svg class="b" style="left:1878px;top:540px" width="14" height="14" viewBox="0 0 14 14"><path d="M4 5.5 L7 2.3 L10 5.5Z M4 8.7 L7 11.9 L10 8.7Z" fill="#000"/></svg>
<div class="t" style="left:1857.70px;top:543px;">0.5</div>
<div class="b" style="left:1285px;top:568px;width:609px;height:4px;background:#e7eaea;box-sizing:border-box;border:1px solid #d6d6d6;"></div>
<div class="b" style="left:1285px;top:560px;width:10px;height:21px;background:#0078d7;"></div>
<div class="t bd" style="left:1284.40px;top:584px;letter-spacing:-0.020px;">Slot Wall Width</div>
<div class="t" style="left:1284.40px;top:597px;letter-spacing:-0.029px;">Enter the width of the divider slot walls (mm).</div>
<div class="b" style="left:1855px;top:586px;width:39px;height:18px;background:#fff;box-sizing:border-box;border:1px solid #7a7a7a;"></div>
<div class="b" style="left:1878px;top:588px;width:14px;height:14px;background:#f0f0f0;box-sizing:border-box;border:1px solid #c8c8c8;"></div>
<div class="b" style="left:1878px;top:594px;width:14px;height:1px;background:#c8c8c8;"></div>
<svg class="b" style="left:1878px;top:588px" width="14" height="14" viewBox="0 0 14 14"><path d="M4 5.5 L7 2.3 L10 5.5Z M4 8.7 L7 11.9 L10 8.7Z" fill="#000"/></svg>
<div class="t" style="left:1857.70px;top:591px;">1.6</div>
<div class="b" style="left:1285px;top:616px;width:609px;height:4px;background:#e7eaea;box-sizing:border-box;border:1px solid #d6d6d6;"></div>
<div class="b" style="left:1484px;top:608px;width:10px;height:21px;background:#0078d7;"></div>
<div class="t bd" style="left:1284.40px;top:632px;letter-spacing:-0.023px;">Slot Wall Height</div>
<div class="t" style="left:1284.40px;top:645px;letter-spacing:-0.029px;">Enter the width of the divider slot walls (mm).</div>
<div class="b" style="left:1855px;top:634px;width:39px;height:18px;background:#fff;box-sizing:border-box;border:1px solid #7a7a7a;"></div>
<div class="b" style="left:1878px;top:636px;width:14px;height:14px;background:#f0f0f0;box-sizing:border-box;border:1px solid #c8c8c8;"></div>
<div class="b" style="left:1878px;top:642px;width:14px;height:1px;background:#c8c8c8;"></div>
<svg class="b" style="left:1878px;top:636px" width="14" height="14" viewBox="0 0 14 14"><path d="M4 5.5 L7 2.3 L10 5.5Z M4 8.7 L7 11.9 L10 8.7Z" fill="#000"/></svg>
<div class="t" style="left:1857.70px;top:639px;">3.2</div>
<div class="b" style="left:1285px;top:664px;width:609px;height:4px;background:#e7eaea;box-sizing:border-box;border:1px solid #d6d6d6;"></div>
<div class="b" style="left:1584px;top:656px;width:10px;height:21px;background:#0078d7;"></div>
<div class="t bd" style="left:1284.40px;top:680px;letter-spacing:-0.030px;">Divider Hex X Margin</div>
<div class="t" style="left:1284.40px;top:693px;letter-spacing:-0.049px;">Enter the vertical distance from the divider edges to hexagon holes (mm).</div>
<div class="b" style="left:1865px;top:682px;width:29px;height:18px;background:#fff;box-sizing:border-box;border:1px solid #7a7a7a;"></div>
<div class="b" style="left:1878px;top:684px;width:14px;height:14px;background:#f0f0f0;box-sizing:border-box;border:1px solid #c8c8c8;"></div>
<div class="b" style="left:1878px;top:690px;width:14px;height:1px;background:#c8c8c8;"></div>
<svg class="b" style="left:1878px;top:684px" width="14" height="14" viewBox="0 0 14 14"><path d="M4 5.5 L7 2.3 L10 5.5Z M4 8.7 L7 11.9 L10 8.7Z" fill="#000"/></svg>
<div class="t" style="left:1866.88px;top:687px;">2</div>
<div class="b" style="left:1285px;top:712px;width:609px;height:4px;background:#e7eaea;box-sizing:border-box;border:1px solid #d6d6d6;"></div>
<div class="b" style="left:1435px;top:704px;width:10px;height:21px;background:#0078d7;"></div>
<div class="t bd" style="left:1284.40px;top:728px;letter-spacing:-0.007px;">Divider Hex Y Margin</div>
<div class="t" style="left:1284.40px;top:741px;letter-spacing:-0.055px;">Enter the horizontal distance from the divider edges to hexagon holes (mm).</div>
<div class="b" style="left:1865px;top:730px;width:29px;height:18px;background:#fff;box-sizing:border-box;border:1px solid #7a7a7a;"></div>
<div class="b" style="left:1878px;top:732px;width:14px;height:14px;background:#f0f0f0;box-sizing:border-box;border:1px solid #c8c8c8;"></div>
<div class="b" style="left:1878px;top:738px;width:14px;height:1px;background:#c8c8c8;"></div>
<svg class="b" style="left:1878px;top:732px" width="14" height="14" viewBox="0 0 14 14"><path d="M4 5.5 L7 2.3 L10 5.5Z M4 8.7 L7 11.9 L10 8.7Z" fill="#000"/></svg>
<div class="t" style="left:1866.88px;top:735px;">2</div>
<div class="b" style="left:1285px;top:760px;width:609px;height:4px;background:#e7eaea;box-sizing:border-box;border:1px solid #d6d6d6;"></div>
<div class="b" style="left:1435px;top:752px;width:10px;height:21px;background:#0078d7;"></div>
<div class="t bd" style="left:1284.40px;top:776px;letter-spacing:-0.079px;">Fillet Radius</div>
<div class="t" style="left:1284.40px;top:789px;letter-spacing:-0.028px;">Enter the radius of the fillet on the long vertical (when instaled) edges (mm).</div>
<div class="b" style="left:1855px;top:778px;width:39px;height:18px;background:#fff;box-sizing:border-box;border:1px solid #7a7a7a;"></div>
<div class="b" style="left:1878px;top:780px;width:14px;height:14px;background:#f0f0f0;box-sizing:border-box;border:1px solid #c8c8c8;"></div>
<div class="b" style="left:1878px;top:786px;width:14px;height:1px;background:#c8c8c8;"></div>
<svg class="b" style="left:1878px;top:780px" width="14" height="14" viewBox="0 0 14 14"><path d="M4 5.5 L7 2.3 L10 5.5Z M4 8.7 L7 11.9 L10 8.7Z" fill="#000"/></svg>
<div class="t" style="left:1857.70px;top:783px;">1.5</div>
<div class="b" style="left:1285px;top:808px;width:609px;height:4px;background:#e7eaea;box-sizing:border-box;border:1px solid #d6d6d6;"></div>
<div class="b" style="left:1360px;top:800px;width:10px;height:21px;background:#0078d7;"></div>
<div class="b" style="left:1281px;top:822px;width:617px;height:21px;background:#c0dcf3;box-sizing:border-box;border:1px solid #99ccf5;"></div>
<svg class="b" style="left:1285px;top:829px" width="16" height="10" viewBox="0 0 16 10"><path d="M0.8 1.2 L14.2 1.2 L7.5 8.6Z" fill="#000"/></svg>
<div class="t" style="left:1302.10px;top:830px;letter-spacing:-0.104px;">Advanced Parameters - Aquarium Constraints</div>
<div class="t bd" style="left:1284.40px;top:846px;letter-spacing:0.111px;">Basket Width</div>
<div class="t" style="left:1284.40px;top:859px;letter-spacing:0.012px;">Enter the width (front to back) of the filter basket (mm). This defaults to the size of the aquarium chamber.</div>
<div class="b" style="left:1847px;top:848px;width:47px;height:18px;background:#fff;box-sizing:border-box;border:1px solid #7a7a7a;"></div>
<div class="b" style="left:1878px;top:850px;width:14px;height:14px;background:#f0f0f0;box-sizing:border-box;border:1px solid #c8c8c8;"></div>
<div class="b" style="left:1878px;top:856px;width:14px;height:1px;background:#c8c8c8;"></div>
<svg class="b" style="left:1878px;top:850px" width="14" height="14" viewBox="0 0 14 14"><path d="M4 5.5 L7 2.3 L10 5.5Z M4 8.7 L7 11.9 L10 8.7Z" fill="#000"/></svg>
<div class="t" style="left:1860.75px;top:853px;">92</div>
<div class="t bd" style="left:1284.40px;top:872px;letter-spacing:0.010px;">Wall Height</div>
<div class="t" style="left:1284.40px;top:885px;letter-spacing:-0.014px;">Enter the width (side to side) of the filter basket (mm). This defaults to the size of the aquarium chamber.</div>
<div class="b" style="left:1837px;top:874px;width:57px;height:18px;background:#fff;box-sizing:border-box;border:1px solid #7a7a7a;"></div>
<div class="b" style="left:1878px;top:876px;width:14px;height:14px;background:#f0f0f0;box-sizing:border-box;border:1px solid #c8c8c8;"></div>
<div class="b" style="left:1878px;top:882px;width:14px;height:1px;background:#c8c8c8;"></div>
<svg class="b" style="left:1878px;top:876px" width="14" height="14" viewBox="0 0 14 14"><path d="M4 5.5 L7 2.3 L10 5.5Z M4 8.7 L7 11.9 L10 8.7Z" fill="#000"/></svg>
<div class="t" style="left:1851.58px;top:879px;">74.5</div>
<div class="t bd" style="left:1284.40px;top:898px;letter-spacing:0.098px;">Inflow Bottom Distance</div>
<div class="t" style="left:1284.40px;top:911px;letter-spacing:0.049px;">Enter the distance from the top of the basket to the bottom of the inflow area at the back of the basket (bottom as</div>
<div class="t" style="left:1284.40px;top:924px;letter-spacing:-0.058px;">modeled for printing) (mm). This should be large enough to block off access at the top directly to chamber 2.</div>
<div class="b" style="left:1859px;top:906px;width:35px;height:18px;background:#fff;box-sizing:border-box;border:1px solid #7a7a7a;"></div>
<div class="b" style="left:1878px;top:908px;width:14px;height:14px;background:#f0f0f0;box-sizing:border-box;border:1px solid #c8c8c8;"></div>
<div class="b" style="left:1878px;top:914px;width:14px;height:1px;background:#c8c8c8;"></div>
<svg class="b" style="left:1878px;top:908px" width="14" height="14" viewBox="0 0 14 14"><path d="M4 5.5 L7 2.3 L10 5.5Z M4 8.7 L7 11.9 L10 8.7Z" fill="#000"/></svg>
<div class="t" style="left:1860.75px;top:911px;">20</div>
<div class="b" style="left:1285px;top:943px;width:609px;height:4px;background:#e7eaea;box-sizing:border-box;border:1px solid #d6d6d6;"></div>
<div class="b" style="left:1517px;top:935px;width:10px;height:21px;background:#0078d7;"></div>
<div class="t bd" style="left:1284.40px;top:959px;letter-spacing:0.042px;">Slot Cut Basket Distance</div>
<div class="t" style="left:1284.40px;top:972px;letter-spacing:0.016px;">Enter the distance from the top of the basket to the top of the fin sticking out into chamber 1 of the aquarium</div>
<div class="t" style="left:1284.40px;top:985px;letter-spacing:0.007px;">(mm). A slot will be cut into the basket to accommodate this fin. The default setting is to have the top of the</div>
<div class="t" style="left:1284.40px;top:998px;letter-spacing:0.030px;">basket at the back where the water flows in to be level with the lower level for the water line.</div>
<div class="b" style="left:1837px;top:974px;width:57px;height:18px;background:#fff;box-sizing:border-box;border:1px solid #7a7a7a;"></div>
<div class="b" style="left:1878px;top:976px;width:14px;height:14px;background:#f0f0f0;box-sizing:border-box;border:1px solid #c8c8c8;"></div>
<div class="b" style="left:1878px;top:982px;width:14px;height:1px;background:#c8c8c8;"></div>
<svg class="b" style="left:1878px;top:976px" width="14" height="14" viewBox="0 0 14 14"><path d="M4 5.5 L7 2.3 L10 5.5Z M4 8.7 L7 11.9 L10 8.7Z" fill="#000"/></svg>
<div class="t" style="left:1845.47px;top:979px;">144.5</div>
<div class="t bd" style="left:1284.40px;top:1011px;letter-spacing:-0.043px;">Slot Cut Divider Length</div>
<div class="t" style="left:1284.40px;top:1024px;letter-spacing:-0.030px;">Enter the width of the fin sticking out into chamber 1 of the aquarium (mm).</div>
<div class="b" style="left:1837px;top:1013px;width:57px;height:18px;background:#fff;box-sizing:border-box;border:1px solid #7a7a7a;"></div>
<div class="b" style="left:1878px;top:1015px;width:14px;height:14px;background:#f0f0f0;box-sizing:border-box;border:1px solid #c8c8c8;"></div>
<div class="b" style="left:1878px;top:1021px;width:14px;height:1px;background:#c8c8c8;"></div>
<svg class="b" style="left:1878px;top:1015px" width="14" height="14" viewBox="0 0 14 14"><path d="M4 5.5 L7 2.3 L10 5.5Z M4 8.7 L7 11.9 L10 8.7Z" fill="#000"/></svg>
<div class="t" style="left:1851.58px;top:1018px;">24.5</div>
<div class="t bd" style="left:1284.40px;top:1037px;letter-spacing:-0.047px;">Slot Cut Width</div>
<div class="t" style="left:1284.40px;top:1050px;letter-spacing:-0.061px;">Enter the thickness of the fin sticking out into chamber 1 of the aquarium (mm).</div>
<div class="b" style="left:1847px;top:1039px;width:47px;height:18px;background:#fff;box-sizing:border-box;border:1px solid #7a7a7a;"></div>
<div class="b" style="left:1878px;top:1041px;width:14px;height:14px;background:#f0f0f0;box-sizing:border-box;border:1px solid #c8c8c8;"></div>
<div class="b" style="left:1878px;top:1047px;width:14px;height:1px;background:#c8c8c8;"></div>
<svg class="b" style="left:1878px;top:1041px" width="14" height="14" viewBox="0 0 14 14"><path d="M4 5.5 L7 2.3 L10 5.5Z M4 8.7 L7 11.9 L10 8.7Z" fill="#000"/></svg>
<div class="t" style="left:1866.88px;top:1044px;">4</div>
<div class="b" style="left:1280px;top:1058px;width:640px;height:22px;background:#f0f0f0;"></div>
<div class="b" style="left:1280px;top:1058px;width:636px;height:1px;background:#828790;"></div>
<div class="b" style="left:48px;top:1078px;width:288px;height:1px;background:#cbcbcb;"></div>
<div class="b" style="left:49px;top:1079px;width:286px;height:1px;background:#fcfcfc;"></div>
<div class="t" style="left:1822.40px;top:1066px;letter-spacing:-0.256px;">OpenSCAD 2021.01</div>
<div class="t" style="left:1.80px;top:1066px;letter-spacing:0.163px;">Viewport: translate = [ 4.74 -6.92 23.13 ], rotate = [ 36.10 0.00 221.90 ], distance = 572.98, fov = 22.50 (1276x982)</div>
</body></html>
